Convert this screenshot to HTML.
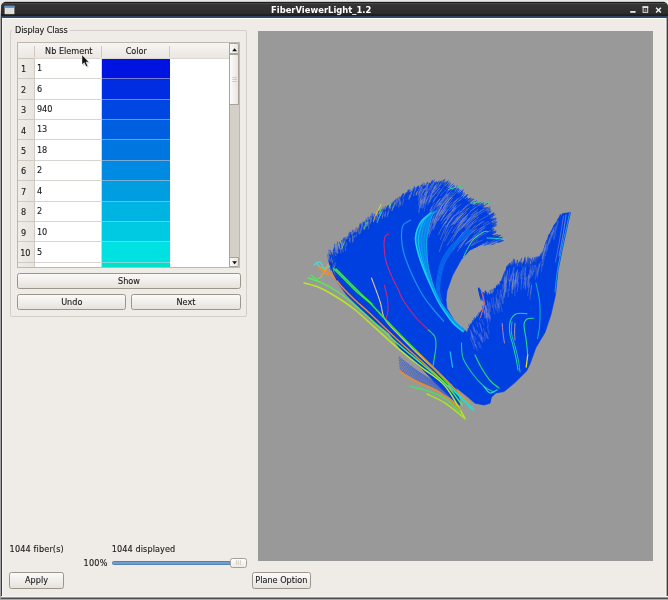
<!DOCTYPE html>
<html>
<head>
<meta charset="utf-8">
<title>FiberViewerLight_1.2</title>
<style>
html,body{margin:0;padding:0;}
body{width:668px;height:600px;overflow:hidden;position:relative;background:#e9e9e9;
  font-family:"DejaVu Sans","Liberation Sans",sans-serif;font-size:8.15px;color:#1a1a1a;-webkit-text-stroke:0.12px #1a1a1a;}
.abs{position:absolute;}
#win{position:absolute;left:1px;top:2px;width:667px;height:597px;background:#3c3c3c;border-radius:5px 5px 0 0;}
#title{position:absolute;left:0;top:0;width:667px;height:16px;border-radius:5px 5px 0 0;background:linear-gradient(#1e1e1e 0px 1px,#464646 1px 2px,#363636 2px 3px,#343434 3px 4px,#333333 4px 5px,#323232 5px 6px,#313131 6px 7px,#303030 7px 8px,#2f2f2f 8px 9px,#2e2e2e 9px 10px,#2d2d2d 10px 11px,#2b2b2b 11px 12px,#202020 12px 13px,#1d1d1d 13px 14px,#2e4262 14px 15px,#474747 15px 16px);}
#title .t{-webkit-text-stroke:0;position:absolute;left:270px;top:2.5px;white-space:nowrap;color:#fff;font-weight:bold;font-size:8.4px;letter-spacing:0.02px;line-height:10px;will-change:transform;}
#client{position:absolute;left:1px;top:16px;width:665px;height:580px;background:#efebe7;border-top:1px solid #fdfdfc;box-sizing:border-box;}
.txt{position:absolute;white-space:nowrap;line-height:10px;}
.btn{position:absolute;box-sizing:border-box;border:1px solid #9c958c;border-radius:2.5px;
  background:linear-gradient(#fbfaf9,#f1eeeb 50%,#e6e1dc);text-align:center;line-height:13.5px;}
</style>
</head>
<body>
<div class="abs" style="left:5px;top:1px;width:659px;height:1px;background:#c4c4c4;"></div>
<div class="abs" style="left:0;top:8px;width:1px;height:592px;background:linear-gradient(#e9e9e9,#a2a2a2 10px);"></div>
<div id="win">
  <div id="title"><div class="t">FiberViewerLight_1.2</div>
    <svg class="abs" style="left:0;top:0;" width="666" height="15" viewBox="0 0 666 15">
      <!-- app icon -->
      <rect x="4" y="4.2" width="9" height="7.6" fill="#deded8" stroke="#f4f4f2" stroke-width="0.7"/>
      <rect x="3.7" y="3.9" width="9.6" height="2" fill="#5a8fd0"/>
      <!-- minimize -->
      <rect x="629.2" y="9" width="5.4" height="1.8" fill="#e8e8e8"/>
      <!-- maximize -->
      <rect x="642.1" y="4.9" width="4.6" height="5.5" fill="#3a3a3a" stroke="#dcdcdc" stroke-width="1"/>
      <rect x="641.6" y="4.3" width="5.6" height="1.7" fill="#e4e4e4"/>
      <path d="M644.4 6.4v3.6M642.6 8.2h3.6" stroke="#8a8a8a" stroke-width="0.6"/>
      <!-- close -->
      <path d="M655.1 5.7 L659.9 10.6 M659.9 5.7 L655.1 10.6" stroke="#f0f0f0" stroke-width="1.5" fill="none"/>
    </svg>
  </div>
  <div id="client"></div>
</div>
<div class="abs" style="left:2px;top:19px;width:1px;height:578px;background:#f8f6f4;"></div>
<div class="abs" style="left:665px;top:19px;width:1px;height:578px;background:#f5f3f0;"></div>
<div class="abs" style="left:666px;top:18px;width:1px;height:580px;background:#b0afae;"></div>
<div class="abs" style="left:1px;top:596px;width:667px;height:4px;background:linear-gradient(#f5f3f0 0 1px,#9a9998 1px 2px,#505050 2px 3px,#a8a8a8 3px 4px);"></div>
<div class="abs" style="left:0;top:596px;width:1px;height:4px;background:#a2a2a2;"></div>
<!-- all coordinates below are page coordinates -->
<div id="ui" class="abs" style="left:0;top:0;width:668px;height:600px;will-change:transform;">
  <!-- group box -->
  <div class="abs" style="left:9.5px;top:30px;width:237.5px;height:287px;border:1px solid #d3cec8;border-radius:2px;box-sizing:border-box;"></div>
  <div class="txt" style="left:12px;top:24.5px;padding:0 2.5px 0 3px;background:#efebe7;letter-spacing:-0.1px;">Display Class</div>

  <!-- table -->
  <div class="abs" id="tbl" style="left:17.3px;top:41.6px;width:222.6px;height:226.2px;background:#fff;border:1px solid #bdb7b0;box-sizing:border-box;overflow:hidden;">
   <div class="abs" style="left:0;top:0;width:211px;height:15.6px;background:linear-gradient(#f6f4f2,#ebe7e3);border-bottom:1px solid #dcd7d2;"></div>
   <div class="abs" style="left:0;top:15.6px;width:16px;height:224px;background:linear-gradient(90deg,#f0ede9,#e8e4e0);border-right:1px solid #cfc9c2;border-top:1px solid #c9c3bc;"></div>
   <div class="abs" style="left:15.5px;top:3px;width:1px;height:11px;background:#cfc9c2;"></div>
   <div class="abs" style="left:83px;top:3px;width:1px;height:11px;background:#cfc9c2;"></div>
   <div class="abs" style="left:151px;top:3px;width:1px;height:11px;background:#cfc9c2;"></div>
   <div class="txt" style="left:17px;width:67px;text-align:center;top:3.4px;">Nb Element</div>
   <div class="txt" style="left:84px;width:68px;text-align:center;top:3.4px;">Color</div>
   <div class="abs" style="left:0;top:16.10px;width:16px;height:19.42px;border-bottom:1px solid #cfc9c2;"></div>
   <div class="txt" style="left:2.8px;top:21.70px;">1</div>
   <div class="abs" style="left:17px;top:16.10px;width:66px;height:19.42px;border-bottom:1px solid #d8d5d1;border-right:1px solid #d8d5d1;"></div>
   <div class="txt" style="left:18.6px;top:20.60px;">1</div>
   <div class="abs" style="left:84px;top:16.10px;width:68px;height:20.42px;background:rgb(0, 20, 225);"></div>
   <div class="abs" style="left:84px;top:35.52px;width:68px;height:1px;background:rgba(216,213,209,0.55);"></div>
   <div class="abs" style="left:0;top:36.52px;width:16px;height:19.42px;border-bottom:1px solid #cfc9c2;"></div>
   <div class="txt" style="left:2.8px;top:42.12px;">2</div>
   <div class="abs" style="left:17px;top:36.52px;width:66px;height:19.42px;border-bottom:1px solid #d8d5d1;border-right:1px solid #d8d5d1;"></div>
   <div class="txt" style="left:18.6px;top:41.02px;">6</div>
   <div class="abs" style="left:84px;top:36.52px;width:68px;height:20.42px;background:rgb(0, 45, 225);"></div>
   <div class="abs" style="left:84px;top:55.94px;width:68px;height:1px;background:rgba(216,213,209,0.55);"></div>
   <div class="abs" style="left:0;top:56.94px;width:16px;height:19.42px;border-bottom:1px solid #cfc9c2;"></div>
   <div class="txt" style="left:2.8px;top:62.54px;">3</div>
   <div class="abs" style="left:17px;top:56.94px;width:66px;height:19.42px;border-bottom:1px solid #d8d5d1;border-right:1px solid #d8d5d1;"></div>
   <div class="txt" style="left:18.6px;top:61.44px;">940</div>
   <div class="abs" style="left:84px;top:56.94px;width:68px;height:20.42px;background:rgb(0, 70, 225);"></div>
   <div class="abs" style="left:84px;top:76.36px;width:68px;height:1px;background:rgba(216,213,209,0.55);"></div>
   <div class="abs" style="left:0;top:77.36px;width:16px;height:19.42px;border-bottom:1px solid #cfc9c2;"></div>
   <div class="txt" style="left:2.8px;top:82.96px;">4</div>
   <div class="abs" style="left:17px;top:77.36px;width:66px;height:19.42px;border-bottom:1px solid #d8d5d1;border-right:1px solid #d8d5d1;"></div>
   <div class="txt" style="left:18.6px;top:81.86px;">13</div>
   <div class="abs" style="left:84px;top:77.36px;width:68px;height:20.42px;background:rgb(0, 95, 225);"></div>
   <div class="abs" style="left:84px;top:96.78px;width:68px;height:1px;background:rgba(216,213,209,0.55);"></div>
   <div class="abs" style="left:0;top:97.78px;width:16px;height:19.42px;border-bottom:1px solid #cfc9c2;"></div>
   <div class="txt" style="left:2.8px;top:103.38px;">5</div>
   <div class="abs" style="left:17px;top:97.78px;width:66px;height:19.42px;border-bottom:1px solid #d8d5d1;border-right:1px solid #d8d5d1;"></div>
   <div class="txt" style="left:18.6px;top:102.28px;">18</div>
   <div class="abs" style="left:84px;top:97.78px;width:68px;height:20.42px;background:rgb(0, 118, 225);"></div>
   <div class="abs" style="left:84px;top:117.20px;width:68px;height:1px;background:rgba(216,213,209,0.55);"></div>
   <div class="abs" style="left:0;top:118.20px;width:16px;height:19.42px;border-bottom:1px solid #cfc9c2;"></div>
   <div class="txt" style="left:2.8px;top:123.80px;">6</div>
   <div class="abs" style="left:17px;top:118.20px;width:66px;height:19.42px;border-bottom:1px solid #d8d5d1;border-right:1px solid #d8d5d1;"></div>
   <div class="txt" style="left:18.6px;top:122.70px;">2</div>
   <div class="abs" style="left:84px;top:118.20px;width:68px;height:20.42px;background:rgb(0, 138, 225);"></div>
   <div class="abs" style="left:84px;top:137.62px;width:68px;height:1px;background:rgba(216,213,209,0.55);"></div>
   <div class="abs" style="left:0;top:138.62px;width:16px;height:19.42px;border-bottom:1px solid #cfc9c2;"></div>
   <div class="txt" style="left:2.8px;top:144.22px;">7</div>
   <div class="abs" style="left:17px;top:138.62px;width:66px;height:19.42px;border-bottom:1px solid #d8d5d1;border-right:1px solid #d8d5d1;"></div>
   <div class="txt" style="left:18.6px;top:143.12px;">4</div>
   <div class="abs" style="left:84px;top:138.62px;width:68px;height:20.42px;background:rgb(0, 158, 225);"></div>
   <div class="abs" style="left:84px;top:158.04px;width:68px;height:1px;background:rgba(216,213,209,0.55);"></div>
   <div class="abs" style="left:0;top:159.04px;width:16px;height:19.42px;border-bottom:1px solid #cfc9c2;"></div>
   <div class="txt" style="left:2.8px;top:164.64px;">8</div>
   <div class="abs" style="left:17px;top:159.04px;width:66px;height:19.42px;border-bottom:1px solid #d8d5d1;border-right:1px solid #d8d5d1;"></div>
   <div class="txt" style="left:18.6px;top:163.54px;">2</div>
   <div class="abs" style="left:84px;top:159.04px;width:68px;height:20.42px;background:rgb(0, 180, 225);"></div>
   <div class="abs" style="left:84px;top:178.46px;width:68px;height:1px;background:rgba(216,213,209,0.55);"></div>
   <div class="abs" style="left:0;top:179.46px;width:16px;height:19.42px;border-bottom:1px solid #cfc9c2;"></div>
   <div class="txt" style="left:2.8px;top:185.06px;">9</div>
   <div class="abs" style="left:17px;top:179.46px;width:66px;height:19.42px;border-bottom:1px solid #d8d5d1;border-right:1px solid #d8d5d1;"></div>
   <div class="txt" style="left:18.6px;top:183.96px;">10</div>
   <div class="abs" style="left:84px;top:179.46px;width:68px;height:20.42px;background:rgb(0, 202, 225);"></div>
   <div class="abs" style="left:84px;top:198.88px;width:68px;height:1px;background:rgba(216,213,209,0.55);"></div>
   <div class="abs" style="left:0;top:199.88px;width:16px;height:19.42px;border-bottom:1px solid #cfc9c2;"></div>
   <div class="txt" style="left:1.9px;top:205.48px;">10</div>
   <div class="abs" style="left:17px;top:199.88px;width:66px;height:19.42px;border-bottom:1px solid #d8d5d1;border-right:1px solid #d8d5d1;"></div>
   <div class="txt" style="left:18.6px;top:204.38px;">5</div>
   <div class="abs" style="left:84px;top:199.88px;width:68px;height:20.42px;background:rgb(0, 225, 225);"></div>
   <div class="abs" style="left:84px;top:219.30px;width:68px;height:1px;background:rgba(216,213,209,0.55);"></div>
   <div class="abs" style="left:0;top:220.30px;width:16px;height:19.42px;border-bottom:1px solid #cfc9c2;"></div>
   <div class="txt" style="left:1.9px;top:225.90px;">11</div>
   <div class="abs" style="left:17px;top:220.30px;width:66px;height:19.42px;border-bottom:1px solid #d8d5d1;border-right:1px solid #d8d5d1;"></div>
   <div class="txt" style="left:18.6px;top:224.80px;"></div>
   <div class="abs" style="left:84px;top:220.30px;width:68px;height:20.42px;background:rgb(0, 225, 200);"></div>
   <div class="abs" style="left:84px;top:239.72px;width:68px;height:1px;background:rgba(216,213,209,0.55);"></div>
   <!-- scrollbar -->
   <div class="abs" style="left:210.5px;top:0;width:11px;height:224px;background:#d6cfc8;border-left:1px solid #a8a29a;box-sizing:border-box;"></div>
   <div class="abs" style="left:210.5px;top:0;width:10.7px;height:11.5px;background:linear-gradient(90deg,#fbfaf9,#e9e5e1);border:1px solid #a8a29a;box-sizing:border-box;border-radius:0 2px 0 0;"></div>
   <div class="abs" style="left:210.5px;top:11px;width:10.7px;height:51px;background:linear-gradient(90deg,#fdfcfc,#e8e4e0);border:1px solid #a8a29a;box-sizing:border-box;"></div>
   <div class="abs" style="left:210.5px;top:214.5px;width:10.7px;height:10.1px;background:linear-gradient(90deg,#fbfaf9,#e9e5e1);border:1px solid #a8a29a;box-sizing:border-box;border-radius:0 0 2px 0;"></div>
   <svg class="abs" style="left:210.5px;top:0;" width="11" height="225" viewBox="0 0 11 225">
     <path d="M3.2 8.2 L5.6 5.2 L8 8.2 Z" fill="#111"/>
     <path d="M3.2 218.2 L5.6 221.2 L8 218.2 Z" fill="#111"/>
     <path d="M3.3 34.5h4.6M3.3 36.5h4.6M3.3 38.5h4.6" stroke="#bdb7b0" stroke-width="0.7"/>
   </svg>
  </div>

  <!-- viewport -->
  <div class="abs" id="vp" style="left:258.3px;top:31.2px;width:394.7px;height:530.2px;background:#999999;"></div>

  <!--FIB--><svg id="fib" class="abs" style="left:0;top:0;" width="668" height="600" viewBox="0 0 668 600">
<path d="M336.0 264.0 L337.0 254.0 L341.0 247.0 L348.0 241.0 L343.4 242.0 L356.0 232.0 L371.6 218.0 L391.2 206.9 L405.8 194.9 L421.4 186.7 L435.0 183.6 L442.7 182.9 L441.0 184.2 L454.4 191.3 L469.9 203.8 L484.4 208.3 L491.0 220.7 L491.7 234.1 L498.4 242.4 L503.6 240.5 L484.7 242.7 L471.7 247.8 L459.9 261.0 L461.0 260.0 L452.5 275.5 L447.0 291.0 L446.0 300.0 L447.0 308.5 L455.0 322.0 L466.0 331.0 L467.0 332.7 L469.9 325.8 L478.7 314.9 L484.6 305.9 L484.5 297.9 L478.3 288.0 L478.9 290.9 L488.5 295.5 L495.2 292.0 L501.9 283.0 L507.1 269.0 L511.0 268.3 L521.8 267.3 L535.7 267.3 L544.3 252.3 L546.7 241.8 L552.2 230.8 L560.1 217.3 L562.5 213.5 L570.5 212.5 L567.0 228.0 L562.5 248.6 L558.0 271.0 L555.5 295.0 L551.0 314.5 L545.0 332.5 L536.0 347.5 L530.0 364.0 L526.6 371.0 L515.0 382.6 L504.0 391.6 L496.0 393.0 L491.5 397.0 L490.0 403.3 L484.0 405.0 L475.0 403.3 L467.8 397.0 L456.0 387.5 L459.7 400.6 L460.0 405.5 L450.7 397.9 L439.0 386.5 L419.5 366.5 L400.0 349.0 L389.3 333.2 L369.1 317.5 L346.6 295.0 L338.0 283.0 L334.0 270.0 Z" fill="#003fe0" stroke="#003fe0" stroke-width="0.6" stroke-linejoin="round"/>
<path d="M335.3 262.4Q334.2 257.7 334.3 253.0M336.9 261.2Q335.3 252.8 334.6 244.2M344.6 256.0Q342.7 248.5 341.9 240.8M337.0 260.3Q335.0 254.8 333.7 249.0M339.9 261.1Q336.6 254.5 334.2 247.5M338.0 258.6Q337.9 253.7 336.3 249.1M332.6 265.6Q331.2 261.0 330.5 256.3M335.7 260.2Q335.4 254.9 334.8 249.6M339.0 259.2Q338.4 254.9 337.5 250.6M344.3 257.7Q342.3 249.8 339.4 242.2M332.6 269.0Q330.6 263.6 329.6 257.9M335.9 262.7Q333.0 258.0 331.3 252.8M331.0 268.8Q329.2 261.6 328.2 254.2M343.5 255.5Q342.1 249.3 339.9 243.3M338.7 259.6Q338.6 253.3 338.2 247.0M331.3 267.4Q329.1 261.3 327.6 254.9M344.8 254.2Q344.0 247.0 343.0 239.9M343.7 256.3Q343.9 251.0 343.5 245.7M340.4 257.3Q337.8 250.8 336.7 243.9M339.8 257.6Q338.8 254.1 337.3 250.8M333.9 267.8Q330.9 260.9 329.2 253.6M333.1 269.6Q331.5 264.9 329.3 260.5M339.2 260.6Q337.5 253.9 334.7 247.6M334.6 268.6Q332.1 263.7 329.4 258.9M334.3 265.8Q331.6 260.6 330.2 254.9M334.6 265.2Q332.8 260.6 331.3 255.9M334.1 269.2Q330.6 263.4 328.2 257.1M337.5 261.0Q335.3 255.8 334.0 250.4M337.4 262.6Q335.1 256.8 333.6 250.8M341.0 255.7Q340.5 250.8 341.1 245.9M339.6 261.2Q336.9 254.9 334.7 248.5M340.5 259.7Q339.4 253.1 337.0 246.8M338.4 259.9Q336.0 255.0 334.6 249.8M340.0 259.4Q339.7 254.3 338.0 249.4M335.5 260.9Q334.1 255.2 333.6 249.4M333.7 263.6Q332.8 257.9 330.8 252.5M347.6 252.4Q345.9 245.3 343.2 238.5M343.6 253.9Q344.1 248.5 343.8 243.1M340.7 255.2Q341.3 249.7 340.7 244.3M339.2 258.8Q338.2 250.4 337.5 242.0M335.3 264.5Q333.8 259.1 331.8 253.9M332.1 263.9Q330.8 257.4 329.5 250.8M335.1 263.1Q333.0 256.7 330.4 250.5M332.9 267.6Q331.6 262.9 329.4 258.5M343.0 257.7Q340.9 253.3 340.0 248.6M335.3 261.8Q334.4 257.5 333.3 253.3M344.0 256.0Q343.0 251.7 341.4 247.6M334.4 262.9Q334.0 257.9 332.9 252.9M344.0 256.4Q343.8 251.4 343.5 246.4M344.1 257.2Q342.5 252.3 341.4 247.4M331.1 270.5Q329.7 264.5 328.2 258.5M331.3 266.8Q329.6 258.4 328.9 249.9M343.0 254.6Q342.3 247.5 341.6 240.5M337.9 262.3Q336.1 256.6 334.2 250.9M347.3 254.2Q344.9 247.4 343.1 240.4M336.8 262.8Q334.8 256.8 332.6 250.7M332.7 269.2Q330.8 264.2 329.7 259.0M340.8 259.0Q338.4 253.5 336.9 247.6M341.7 255.8Q341.5 250.9 339.8 246.2M334.2 264.4Q332.8 259.6 331.4 254.8" stroke="#003fe0" stroke-width="0.7" fill="none" stroke-linecap="round"/>
<path d="M405.6 200.9Q406.8 197.0 408.6 193.2M349.1 244.3Q348.7 240.6 349.5 237.0M393.2 213.1Q394.4 209.1 394.2 205.0M380.9 219.1Q381.4 214.4 382.2 209.8M435.8 190.2Q437.2 185.5 438.9 180.9M431.1 189.8Q432.9 186.0 434.7 182.1M367.8 229.2Q367.2 225.5 367.7 221.8M387.7 214.8Q388.1 210.5 388.4 206.2M355.3 240.7Q355.7 237.1 355.1 233.6M382.4 217.1Q382.5 213.9 383.9 211.1M419.9 194.4Q420.8 188.5 422.9 183.0M429.4 190.9Q431.3 186.5 432.3 181.9M387.4 215.5Q388.7 211.2 388.6 206.7M371.7 226.0Q372.2 221.3 372.0 216.7M361.6 235.6Q361.8 231.7 360.8 227.9M400.3 207.2Q401.1 203.1 401.4 198.9M431.3 190.5Q432.6 187.2 434.1 183.9M354.8 239.6Q354.6 236.5 355.4 233.5M414.2 196.8Q415.7 191.3 418.5 186.3M345.7 248.6Q345.1 244.2 345.5 239.8M359.7 236.1Q359.7 231.2 361.1 226.6M362.7 231.5Q363.7 226.7 364.1 221.9M406.7 200.3Q407.3 195.3 408.9 190.6M372.4 226.0Q372.5 221.2 372.5 216.5M374.8 222.5Q375.4 219.4 375.8 216.2M401.5 204.4Q402.7 200.0 402.4 195.4M354.0 241.8Q353.2 237.5 353.1 233.2M412.3 197.3Q412.8 192.9 413.5 188.6M354.6 240.8Q354.1 236.8 354.7 232.8M389.3 214.7Q390.8 209.3 392.2 203.8M366.1 230.6Q365.5 225.5 366.2 220.4M361.8 235.7Q362.1 231.5 361.4 227.4M391.7 211.0Q392.6 207.9 393.6 204.7M383.0 219.4Q383.4 214.6 384.4 210.0M377.8 220.7Q378.4 217.9 377.9 215.1M380.4 218.5Q381.7 214.9 382.0 211.1M391.7 211.8Q392.9 206.4 394.2 201.1M358.4 236.5Q358.1 233.2 358.0 229.8M361.7 234.6Q361.0 230.8 362.0 226.9M400.7 204.8Q402.0 199.7 403.4 194.6M401.1 203.0Q402.4 200.1 403.4 197.0M391.9 211.7Q392.5 207.8 393.7 203.9M423.2 191.9Q425.2 187.7 426.6 183.2M398.8 206.7Q399.7 202.2 401.2 197.9M425.0 191.8Q426.5 187.1 427.5 182.3M364.7 232.9Q364.8 227.8 364.5 222.6M410.9 196.5Q412.7 191.9 414.7 187.5M417.7 193.7Q419.8 189.6 421.6 185.3M429.5 191.1Q430.8 186.8 432.3 182.6M369.9 226.6Q371.3 222.2 371.8 217.6M371.7 224.9Q371.6 219.1 372.1 213.3M431.3 191.0Q433.4 186.7 434.6 182.1M364.0 233.9Q364.3 228.0 363.3 222.2M439.6 188.7Q441.6 185.4 443.1 181.8M427.8 193.1Q428.4 188.7 429.9 184.6M357.0 238.4Q355.9 233.8 355.7 229.1M364.9 232.7Q364.8 227.2 365.1 221.7M410.5 197.6Q411.9 195.2 412.0 192.3M366.6 229.1Q367.4 225.2 366.9 221.3M353.5 241.2Q353.4 237.6 352.3 234.1M420.4 193.3Q422.9 188.7 424.4 183.6M381.1 217.6Q381.6 212.6 383.2 207.8M417.8 194.9Q418.7 191.3 419.1 187.5M355.7 241.2Q354.6 236.6 355.0 231.9M379.0 219.8Q380.2 214.6 381.1 209.4M405.1 200.9Q406.6 196.0 408.6 191.2M345.8 247.1Q346.2 243.6 345.0 240.2M361.7 234.8Q362.0 230.0 361.7 225.2M406.2 202.7Q407.6 197.7 408.0 192.6M430.5 191.6Q432.4 187.3 433.2 182.6M435.3 191.1Q437.3 186.3 439.8 181.7M353.3 241.7Q353.8 237.9 354.1 234.1M390.8 213.0Q390.5 209.5 391.5 206.0M413.7 195.6Q415.2 191.9 416.1 188.0M390.0 214.1Q390.3 209.3 391.4 204.7M405.2 201.2Q407.0 198.1 407.8 194.5M360.2 236.1Q360.6 230.5 360.7 225.0M350.9 243.1Q350.5 240.0 349.9 236.9M354.6 241.0Q353.6 236.3 353.1 231.5M346.5 246.4Q346.5 242.9 346.9 239.5M394.2 212.0Q395.0 205.4 396.3 199.0M390.9 213.5Q391.0 210.2 392.0 207.0M395.5 208.5Q396.7 205.7 397.0 202.6M356.4 239.9Q357.4 233.9 356.9 228.0M359.1 236.8Q359.0 230.9 360.3 225.1M360.5 235.3Q361.8 229.9 362.0 224.4M422.0 194.5Q423.2 190.1 424.5 185.7M436.8 189.6Q439.3 185.0 442.6 180.9M430.3 191.1Q432.2 187.1 434.5 183.3M352.7 241.7Q352.1 238.0 352.2 234.2M350.8 245.2Q349.2 240.2 349.0 234.9M435.1 190.7Q435.6 186.3 437.6 182.4M386.0 217.8Q385.9 212.2 387.2 206.7M413.7 195.8Q415.5 191.3 417.1 186.8M372.0 223.3Q372.4 220.7 372.8 218.2M386.8 216.6Q386.5 213.2 387.3 209.8M391.0 214.0Q392.2 209.1 392.5 204.1M382.6 219.2Q383.1 215.4 383.5 211.6M399.5 206.1Q399.9 202.9 400.0 199.7M344.7 249.4Q345.1 245.2 344.7 241.0M406.9 200.1Q408.6 195.1 410.4 190.1M421.3 192.8Q423.7 189.5 425.0 185.7M358.7 235.9Q359.3 229.9 360.0 223.8M385.1 216.0Q386.2 213.1 386.0 210.0M411.9 197.3Q412.2 193.9 413.6 190.9M379.6 220.4Q380.5 215.4 381.3 210.4M360.2 235.8Q360.2 229.6 361.2 223.5M357.8 238.2Q358.6 233.8 358.5 229.4M389.8 212.6Q391.8 208.7 392.3 204.3M344.4 249.8Q344.1 245.3 344.9 240.8M427.8 190.8Q430.5 186.0 432.1 180.6M417.0 194.0Q418.3 189.2 420.9 185.1M406.8 200.2Q408.0 196.3 410.0 192.6M423.5 192.2Q426.3 187.8 427.7 182.9M400.6 205.1Q400.8 201.6 402.4 198.4M379.8 219.7Q380.9 214.2 381.4 208.6M399.0 207.1Q399.2 203.7 399.8 200.3M390.8 213.6Q390.7 210.3 391.2 207.0M436.9 188.6Q439.2 184.1 442.2 180.1M417.6 195.7Q419.5 190.8 421.0 185.7M367.2 228.6Q367.3 224.5 366.8 220.5M429.6 190.1Q431.6 184.8 434.3 179.9M412.0 197.0Q412.9 193.6 414.2 190.3M414.2 196.3Q416.6 191.6 418.3 186.7M420.3 193.8Q420.6 189.0 422.2 184.6M381.0 220.2Q380.3 216.4 381.0 212.7M428.2 190.4Q430.4 185.5 432.5 180.5M425.1 191.6Q426.8 187.2 429.6 183.4M407.4 201.1Q407.6 196.9 409.0 193.0M413.8 196.0Q415.1 192.4 416.6 189.0M415.2 196.3Q415.7 191.6 417.1 187.0M379.1 220.1Q380.6 216.2 381.1 212.0M410.7 200.4Q410.9 195.8 412.0 191.3M350.7 245.4Q349.9 241.6 350.0 237.6M374.1 223.6Q373.7 219.1 374.6 214.7M386.3 215.7Q386.5 211.6 387.7 207.7M344.8 249.2Q344.0 243.6 344.1 237.9M374.4 221.9Q375.3 217.9 376.1 213.9M402.4 202.8Q402.8 199.6 403.5 196.5M400.5 203.9Q401.5 200.0 402.5 196.1M364.4 231.2Q363.7 226.7 364.5 222.2M433.3 189.5Q435.2 186.2 436.7 182.6M403.0 203.1Q404.4 198.5 406.1 194.1M373.5 224.5Q374.0 220.6 374.1 216.6M403.1 203.4Q405.1 198.2 406.0 192.7M395.6 208.2Q396.8 203.0 398.0 197.7M392.4 211.1Q392.6 208.3 393.7 205.7M378.1 219.5Q379.0 215.1 379.7 210.8M438.7 189.8Q441.0 185.8 443.3 181.7M402.0 205.3Q402.6 201.0 403.7 196.8M407.1 200.6Q409.0 195.7 410.2 190.6M414.4 195.9Q415.3 192.9 415.9 189.8M437.3 189.2Q439.6 185.5 441.3 181.3M346.1 247.3Q345.2 242.5 345.3 237.6M400.0 204.6Q400.5 199.5 402.2 194.5M411.8 198.9Q412.9 194.1 414.0 189.3M365.7 228.6Q365.7 225.7 366.5 223.0M379.7 221.0Q379.9 216.0 380.8 211.0M349.2 246.5Q349.1 241.2 348.0 236.1M361.9 235.5Q361.8 230.5 361.2 225.6M378.2 221.6Q378.5 216.2 378.3 210.8M351.8 242.5Q352.8 236.4 352.4 230.1M366.7 230.2Q366.6 226.4 366.1 222.6M429.4 190.0Q430.8 187.7 431.5 185.2M392.8 211.3Q395.1 206.4 395.8 201.0M389.0 213.9Q390.6 208.1 392.2 202.2M434.9 190.8Q436.6 186.9 438.8 183.4M395.0 210.9Q395.8 206.5 397.0 202.1M439.4 188.8Q440.2 185.7 442.0 183.1M400.6 203.8Q401.7 198.8 404.0 194.2M418.6 192.9Q420.1 189.6 421.3 186.0M350.2 243.5Q349.9 239.3 350.4 235.0M397.5 206.5Q397.9 203.2 399.6 200.4M413.3 195.9Q414.9 193.5 415.4 190.7M348.0 245.9Q347.1 242.4 347.6 238.9M432.1 190.0Q434.2 186.8 435.0 183.0M359.0 238.6Q358.9 233.6 358.1 228.6M386.1 215.0Q386.5 210.1 388.3 205.6M358.4 237.0Q357.9 232.0 358.9 227.1M388.1 214.7Q390.1 208.9 391.0 202.8M400.0 207.2Q401.2 202.2 401.3 197.1M350.2 246.5Q349.3 240.2 348.6 233.9M434.2 189.1Q435.3 186.6 436.2 184.0M380.9 219.6Q382.3 214.8 382.8 209.8M391.7 211.9Q393.3 207.7 393.6 203.2M397.5 207.8Q398.4 202.7 400.2 197.7M376.7 221.5Q376.2 218.0 377.0 214.6M368.0 226.2Q368.6 222.4 369.2 218.6M402.6 204.1Q403.4 199.2 405.2 194.5M395.8 209.0Q396.9 205.9 396.3 202.6M368.3 227.6Q369.0 222.6 369.1 217.5M408.1 200.3Q409.5 195.9 411.4 191.6M369.1 225.8Q369.7 223.1 370.0 220.4M345.0 248.8Q345.4 243.4 344.5 238.0M366.1 231.1Q365.2 226.7 365.6 222.2M348.8 246.7Q347.9 242.1 347.3 237.3M357.5 238.1Q357.6 233.9 357.8 229.6M411.8 197.0Q413.9 192.8 415.7 188.4M379.7 222.6Q380.0 217.3 379.6 212.1M428.0 191.1Q429.8 188.5 430.6 185.4M411.9 196.4Q413.9 192.9 414.9 189.0M348.9 246.7Q348.5 242.6 348.1 238.6M438.6 190.7Q439.5 186.9 441.2 183.4M433.6 191.6Q434.7 186.9 436.8 182.5M349.8 244.3Q350.4 238.4 350.0 232.6M428.6 192.2Q430.6 188.5 431.8 184.4M382.8 217.7Q382.9 214.5 383.5 211.4M386.0 216.8Q387.9 211.7 388.8 206.4M434.9 190.3Q437.8 186.0 440.4 181.5M365.8 230.2Q365.8 227.3 365.4 224.5M392.7 213.5Q393.0 208.0 393.5 202.5M431.1 190.1Q433.5 185.6 436.4 181.4M410.4 197.9Q411.9 193.3 412.7 188.6M386.1 217.7Q387.2 211.6 388.0 205.4M436.4 190.2Q438.4 187.3 439.8 184.0M419.4 192.7Q421.0 188.9 422.3 185.0M398.5 206.6Q399.6 202.2 400.6 197.7M355.0 240.2Q354.6 236.7 354.0 233.3M399.6 206.1Q401.4 200.9 402.7 195.5M384.9 217.9Q385.9 212.9 386.5 207.9M361.6 233.6Q361.7 229.3 362.0 225.0M349.7 246.1Q348.6 242.0 348.2 237.8M392.1 211.8Q392.5 208.7 393.3 205.7M354.6 240.7Q354.8 237.0 354.9 233.3M382.7 217.3Q383.9 211.9 385.4 206.6M404.7 203.3Q406.4 198.0 406.7 192.6M384.1 216.6Q385.2 212.4 386.4 208.3M366.1 231.0Q367.3 226.2 367.1 221.3M397.8 209.0Q398.3 205.2 398.2 201.3M382.8 219.1Q383.0 214.7 382.7 210.4M414.8 195.2Q416.1 190.3 418.6 185.8M392.2 211.3Q393.5 206.2 394.3 201.1M438.8 190.6Q441.5 185.7 443.6 180.5M435.3 189.1Q437.1 185.8 437.9 182.1M412.5 198.2Q413.5 192.4 414.4 186.7M364.7 230.9Q364.9 227.5 365.0 224.1M353.0 239.9Q353.4 235.0 353.9 230.1M427.2 191.2Q428.7 186.3 431.4 182.1M415.5 195.2Q417.6 191.5 418.6 187.4M398.9 206.2Q401.0 200.4 402.9 194.6M375.2 224.2Q375.6 220.0 376.2 215.8M366.3 229.4Q367.4 225.6 367.9 221.6M405.4 199.6Q406.9 194.4 409.1 189.4M396.3 208.5Q396.3 205.6 396.7 202.7M396.0 208.6Q397.7 202.6 399.9 196.7M400.9 205.8Q402.0 201.8 402.8 197.7M413.1 196.6Q414.7 192.5 415.6 188.2M359.9 235.2Q360.1 230.6 360.7 226.1M365.2 231.6Q365.0 225.2 366.1 218.9M437.4 189.1Q438.7 185.0 441.2 181.5M430.2 190.1Q432.2 186.6 433.6 182.8M425.6 193.3Q426.8 188.0 429.5 183.3M347.8 246.9Q347.2 242.0 346.9 237.1M349.0 244.5Q349.0 240.6 349.0 236.7M367.5 227.7Q367.4 222.4 368.1 217.2M381.3 219.9Q382.1 214.9 383.3 209.9M399.3 206.5Q401.6 200.5 402.9 194.1M352.7 242.9Q353.0 238.8 352.9 234.7M391.7 211.5Q393.6 205.7 395.4 199.9M352.1 245.3Q351.4 238.7 349.9 232.1M351.8 242.9Q351.9 239.2 351.4 235.5M406.6 202.6Q407.2 196.5 408.0 190.3M394.7 210.7Q394.6 206.2 395.7 201.9M400.8 203.4Q402.8 198.6 403.7 193.4M377.5 220.9Q377.5 215.9 378.1 210.9M388.3 215.1Q388.2 212.1 388.4 209.1M362.4 234.8Q362.5 228.7 362.6 222.6M372.7 224.1Q374.4 219.3 374.8 214.3M411.8 198.5Q412.7 193.4 414.7 188.7M422.5 192.5Q423.3 188.8 424.5 185.3M349.8 244.1Q349.8 239.9 350.2 235.7M354.8 241.0Q354.6 236.1 354.4 231.2M419.7 193.6Q420.0 190.1 421.0 186.7M401.3 204.1Q402.5 199.8 402.7 195.3M414.1 196.6Q415.7 192.1 417.2 187.6M363.7 233.4Q362.8 228.9 362.8 224.4M382.7 220.1Q382.2 214.6 383.3 209.2M366.8 229.4Q366.2 225.4 366.7 221.4M419.8 193.1Q420.8 190.2 421.0 187.1M375.8 222.5Q376.0 218.0 377.4 213.7M403.3 204.3Q404.3 200.3 404.7 196.2M438.0 189.0Q440.3 186.2 441.5 182.8M372.8 223.4Q373.0 219.0 373.0 214.6M393.5 209.8Q394.6 205.3 395.7 200.9M411.6 197.4Q413.9 192.9 415.1 188.0M429.9 190.8Q431.8 187.6 433.5 184.3M382.8 220.1Q383.5 215.5 383.4 210.9M376.2 221.8Q377.1 218.7 377.2 215.5M351.8 243.1Q352.8 238.0 352.3 232.9M426.0 191.4Q428.3 187.5 429.2 183.1M350.2 242.5Q351.1 239.1 350.6 235.7M350.0 244.9Q350.2 238.6 350.9 232.3M396.2 208.6Q395.7 205.2 396.7 202.0M388.1 216.6Q389.1 212.2 389.3 207.7M406.4 200.1Q407.4 196.4 408.3 192.6M369.3 227.2Q369.7 221.7 370.5 216.1M415.1 196.1Q417.2 192.1 417.8 187.5M350.9 243.4Q350.9 238.7 350.3 234.0M363.5 234.7Q363.7 230.7 362.7 226.7M404.8 202.8Q405.7 198.3 405.9 193.7" stroke="#003fe0" stroke-width="0.7" fill="none" stroke-linecap="round"/>
<path d="M475.4 218.6Q481.3 215.5 486.4 211.2M475.9 217.0Q479.9 214.3 484.4 212.5M483.8 241.8Q491.2 238.5 498.9 235.9M439.4 196.9Q444.5 191.2 449.3 185.2M471.9 212.8Q476.8 209.1 481.8 205.5M486.7 243.5Q494.0 240.1 501.6 237.4M436.1 194.1Q441.2 187.9 446.2 181.5M441.4 197.6Q445.6 193.0 449.5 188.2M481.5 235.1Q488.7 233.1 496.0 231.1M484.6 240.9Q491.2 239.0 498.1 238.2M435.7 194.5Q439.3 188.9 443.4 183.7M437.1 194.1Q441.5 188.8 445.0 182.8M479.6 234.3Q486.3 231.0 493.3 228.5M479.8 223.2Q485.3 219.7 490.9 216.4M470.8 212.8Q475.6 209.3 480.6 206.3M474.4 216.3Q480.2 212.1 486.1 208.0M479.6 228.0Q484.4 225.8 489.2 223.8M480.2 232.8Q487.4 230.1 494.0 226.2M433.2 193.3Q437.2 187.6 441.8 182.4M438.8 195.1Q441.9 191.8 444.6 188.0M480.8 229.6Q485.8 228.2 490.6 226.4M486.6 242.6Q490.9 242.3 495.0 240.7M479.3 233.5Q484.8 231.6 490.5 230.0M461.1 211.4Q465.8 207.8 470.3 204.0M456.1 207.0Q461.6 203.8 466.2 199.4M456.1 207.5Q462.7 203.8 468.4 198.8M433.8 192.8Q437.7 187.8 442.5 183.5M481.2 229.0Q486.4 226.9 491.2 224.0M451.7 203.4Q456.3 199.5 460.8 195.5M476.1 215.9Q480.0 213.4 483.5 210.2M470.1 212.5Q475.7 210.1 480.8 206.7M456.2 207.2Q461.3 202.2 467.4 198.4M478.9 221.1Q486.1 218.1 492.7 214.0M467.1 212.1Q472.2 206.7 478.1 202.4M450.5 202.8Q455.9 197.6 460.9 192.1M481.5 236.7Q486.2 235.8 490.7 234.2M446.9 198.8Q450.1 195.3 453.4 192.0M443.7 198.0Q447.8 194.4 451.7 190.5M452.0 204.5Q456.8 198.3 462.5 192.9M468.3 213.1Q473.6 209.1 478.3 204.4M481.5 231.1Q488.4 227.6 495.0 223.5M456.7 206.3Q460.4 203.3 464.3 200.7M449.0 202.0Q455.6 195.7 463.0 190.6M479.2 220.4Q483.5 216.7 488.5 214.3M450.5 203.9Q455.1 199.1 460.7 195.4M471.3 211.8Q475.7 208.9 480.5 206.7M451.6 203.5Q456.6 198.3 461.9 193.6M481.5 237.5Q487.6 234.7 493.9 232.6M445.9 199.2Q451.2 194.1 457.1 189.5M449.0 201.3Q454.0 196.9 459.4 193.1M454.6 206.7Q459.3 202.5 463.4 197.8M456.2 207.1Q461.4 202.6 466.8 198.2M479.4 226.0Q484.6 222.9 490.2 220.5M476.9 220.4Q485.6 217.0 494.1 213.2M479.4 230.5Q484.8 228.7 490.0 226.4M472.9 213.7Q478.2 210.0 483.4 206.1M438.9 196.8Q441.7 192.1 445.7 188.2M480.2 227.8Q486.0 225.2 491.9 223.0M451.9 202.3Q455.3 199.8 457.6 196.3M447.5 200.5Q452.8 195.7 458.9 191.9M461.6 211.5Q467.3 207.2 472.8 202.7M485.5 244.8Q492.5 243.0 499.4 240.7M458.9 208.4Q463.9 204.9 468.7 201.3M457.9 209.1Q463.6 203.6 469.9 198.8M480.8 238.7Q488.4 236.9 496.0 234.9M485.4 243.2Q493.3 242.1 501.1 240.2M459.9 211.4Q466.5 204.8 473.8 199.1M442.4 196.8Q448.8 192.1 454.3 186.2M481.3 229.8Q485.8 228.2 490.2 226.2M480.5 230.4Q488.4 226.4 496.5 222.7M457.9 207.5Q461.7 203.9 465.5 200.3M480.1 232.5Q487.2 228.8 494.1 224.5M459.2 208.2Q465.6 204.7 471.4 200.2M453.4 205.5Q457.7 201.2 462.2 197.2M475.9 216.6Q482.9 211.6 490.2 206.9M479.2 227.4Q487.8 222.9 496.4 218.8M465.8 212.5Q471.2 208.3 477.1 205.0M480.4 232.9Q485.4 230.4 490.7 228.5M432.5 193.2Q438.3 186.2 445.1 180.3M468.3 212.2Q473.1 209.8 477.6 206.6M459.4 211.1Q465.9 204.6 473.1 198.9M436.2 195.0Q442.9 188.3 449.8 181.9M482.1 239.0Q487.5 238.3 492.6 236.4M443.4 196.2Q448.3 191.4 454.1 187.4M448.1 199.3Q453.8 194.6 459.6 189.7M480.6 237.4Q486.5 235.1 492.4 233.2M485.9 242.2Q491.2 240.3 496.6 239.0M483.5 239.5Q489.4 238.3 495.2 236.9M457.4 209.1Q462.4 203.9 467.7 198.9M484.4 241.2Q492.1 237.9 500.2 235.2M443.1 199.2Q447.0 194.1 451.6 189.7M481.0 223.8Q485.8 222.4 489.9 219.5M484.2 242.4Q491.2 240.6 497.7 237.4M446.7 201.7Q451.0 197.7 454.5 192.9M443.7 197.8Q449.1 192.0 454.4 186.1M477.7 220.9Q485.6 217.0 493.8 213.8M481.0 237.3Q488.5 235.4 495.7 232.4M480.7 227.0Q486.6 222.6 493.0 219.1M485.2 242.5Q490.5 239.6 496.4 238.1M465.0 210.1Q471.4 207.3 476.9 203.2M459.8 209.1Q463.8 205.6 467.9 202.2M442.4 197.2Q445.4 193.4 448.8 189.9M452.3 203.9Q456.8 200.6 460.8 196.8M484.6 240.3Q488.9 239.5 493.2 238.2M438.4 194.0Q443.2 189.9 447.6 185.2M447.6 198.8Q450.2 195.3 453.6 192.9M456.3 207.5Q461.0 204.5 465.6 201.3M437.4 195.6Q442.0 188.4 447.7 182.1M455.1 204.4Q461.0 200.0 466.8 195.5M446.3 198.6Q449.8 194.9 454.1 192.1M442.3 197.5Q445.9 193.7 449.3 189.8M472.2 213.4Q476.0 210.9 479.3 207.8M472.7 213.8Q479.9 208.3 487.5 203.5M475.7 213.6Q480.2 209.9 485.4 207.2M479.8 228.9Q484.3 226.3 489.2 224.2M471.4 212.9Q476.2 210.6 480.2 207.2M484.7 241.5Q491.0 240.4 496.9 237.8M437.6 194.8Q443.7 188.6 450.6 183.2M447.9 201.4Q452.9 197.3 458.1 193.3M439.0 194.6Q441.8 190.7 445.6 187.9M456.5 206.3Q462.3 201.3 467.2 195.5M481.5 228.3Q486.3 225.7 491.1 223.2M483.7 240.4Q487.9 238.3 492.6 237.2M469.6 213.8Q476.7 208.2 483.9 202.7M446.7 198.3Q451.5 193.1 455.9 187.6M456.9 206.5Q460.5 203.8 463.9 200.7M473.8 213.6Q478.2 211.0 482.8 208.9M455.2 204.7Q458.6 201.5 462.0 198.2M479.2 230.5Q484.2 228.3 489.5 226.8M485.0 243.6Q493.1 241.5 501.0 238.7M465.0 211.9Q470.0 208.4 475.1 205.0M474.3 216.0Q481.9 212.2 489.4 208.4M481.7 235.1Q488.0 233.2 493.6 229.8M466.1 212.3Q470.9 208.9 475.5 205.2M446.4 201.3Q450.3 197.0 454.4 192.8M484.7 241.8Q491.0 239.8 497.2 237.4M485.0 243.4Q490.6 242.3 496.0 240.6M436.0 193.5Q439.1 188.9 442.7 184.6M480.7 227.4Q485.1 225.6 489.6 224.1M459.4 210.5Q464.5 206.3 470.4 203.2M435.5 194.8Q441.2 188.8 447.1 183.1M445.2 198.4Q450.1 193.1 455.6 188.3M445.6 200.0Q449.8 195.2 454.4 190.7M479.2 225.6Q487.5 222.3 495.7 218.7M448.0 199.7Q452.2 195.6 457.3 192.6M434.7 193.0Q438.3 190.0 440.8 186.1M449.2 203.0Q454.6 196.2 460.9 190.2M480.9 231.4Q488.2 227.5 495.9 224.5M468.6 214.3Q473.2 210.9 477.3 206.8M477.4 220.7Q482.1 217.3 487.2 214.8M465.7 212.4Q471.4 208.6 476.6 204.4M447.4 198.7Q450.4 195.0 454.1 192.1M434.0 192.2Q437.2 188.9 440.6 185.8M453.8 206.3Q459.6 201.0 465.7 196.1M437.1 195.1Q442.2 187.4 448.3 180.4M451.9 205.0Q457.4 199.4 462.7 193.6M477.4 217.6Q482.4 214.4 487.4 211.2M459.2 207.9Q465.2 202.9 471.7 198.7M465.7 213.0Q474.1 207.6 481.8 201.4M475.2 218.6Q480.2 215.2 485.8 212.7M456.3 206.3Q459.2 202.7 462.9 200.1M456.5 208.7Q461.1 205.3 465.8 202.1M480.3 237.0Q487.9 235.2 495.3 232.7M475.5 215.6Q480.8 211.7 486.3 208.0M462.7 210.5Q467.1 207.3 471.3 204.0M472.2 212.3Q477.7 208.4 483.9 205.8M464.5 211.6Q468.8 208.2 473.8 206.0M456.9 206.2Q462.3 202.2 467.5 197.9M484.1 240.3Q490.5 236.7 497.6 234.6M449.6 203.2Q453.4 198.4 458.1 194.5M482.9 240.5Q488.5 238.8 494.2 237.6M479.8 235.9Q486.2 233.0 492.9 230.8M480.0 239.2Q486.5 237.0 492.4 233.6M443.6 198.4Q449.5 192.5 456.2 187.7M469.1 212.7Q473.5 209.4 478.5 206.8M487.9 244.4Q493.2 242.1 498.7 240.4M453.0 204.8Q457.2 202.1 460.9 198.5M445.4 197.8Q449.3 194.1 453.8 191.0M479.8 224.1Q486.1 221.4 492.6 219.0M449.7 202.7Q456.3 196.2 463.2 190.0M476.2 214.5Q481.8 210.7 487.7 207.4M444.2 197.8Q450.2 191.3 457.3 185.9M484.7 242.8Q490.6 239.5 497.2 237.7M452.5 203.9Q457.4 200.0 462.6 196.5M440.0 197.3Q444.3 193.2 447.7 188.3M479.2 223.2Q485.0 219.9 490.7 216.4M458.4 207.2Q462.1 204.6 465.4 201.4M475.2 213.3Q478.7 210.8 482.4 208.4M468.4 212.3Q474.9 207.4 481.9 203.5M483.8 240.6Q489.0 239.2 493.7 236.7M468.6 212.5Q474.3 209.9 479.5 206.6M458.6 209.6Q463.0 205.5 468.4 202.5M434.5 193.7Q439.4 186.3 444.6 179.2M469.3 211.3Q473.1 209.0 476.9 206.9M452.0 203.1Q458.2 197.9 464.6 193.0M473.6 215.2Q479.7 212.2 485.1 208.1M478.2 219.3Q484.2 215.1 490.1 211.0M465.1 213.1Q471.1 208.1 477.5 203.5M438.1 195.3Q444.5 190.4 450.3 184.6M467.3 211.8Q474.6 208.4 481.3 203.9M466.1 212.6Q471.0 209.9 475.5 206.6M477.2 219.3Q481.8 216.3 486.8 213.9M485.2 243.2Q492.1 240.6 499.4 239.0M453.0 206.6Q459.2 201.0 464.4 194.4M464.3 212.8Q468.6 209.1 472.8 205.2M437.9 195.8Q441.7 191.3 446.5 188.0M479.0 230.6Q486.0 229.1 492.5 226.1M449.4 202.5Q453.8 198.2 458.5 194.2M480.1 234.3Q485.2 232.5 490.0 229.8M480.0 231.3Q486.4 228.6 492.8 225.8M451.1 201.9Q456.0 197.6 461.4 194.0M480.7 238.8Q486.9 237.3 492.9 235.2M468.1 212.0Q473.8 209.1 479.4 205.8M462.3 211.0Q469.1 205.3 476.7 200.8M473.5 214.3Q478.8 211.2 483.4 207.4M484.7 242.4Q488.8 239.9 493.4 238.7M468.1 212.8Q472.3 209.5 476.7 206.5M465.7 211.9Q471.6 208.7 477.4 205.3M454.2 205.5Q457.9 202.6 460.8 198.8M480.9 234.3Q487.7 232.5 494.0 229.3M470.2 211.8Q474.3 208.7 478.8 206.1M457.0 207.4Q462.0 204.1 466.4 200.0M446.9 199.9Q452.5 194.3 458.7 189.4M448.4 200.0Q452.2 197.1 456.0 194.2M481.9 233.7Q487.0 231.3 492.4 229.3M479.8 231.4Q485.3 229.5 490.7 227.2M487.5 244.4Q495.2 242.0 502.6 238.8M484.0 240.3Q488.6 238.4 493.2 236.4M477.9 223.5Q485.6 219.2 493.3 214.8M481.5 230.1Q487.5 228.1 493.3 225.5M479.3 223.8Q486.0 220.5 492.9 217.7M479.7 233.0Q484.8 231.3 489.4 228.4M480.0 230.8Q487.8 227.1 496.0 224.7M444.6 198.5Q451.2 193.2 457.8 187.7M478.9 231.2Q487.8 229.0 496.4 225.8M454.0 206.1Q460.4 199.6 467.9 194.2M451.4 201.9Q455.5 198.6 459.1 194.8M482.9 240.6Q488.0 238.4 493.3 236.5M434.1 194.4Q439.1 188.2 444.4 182.3M471.7 212.7Q477.8 208.9 483.0 204.0M458.5 207.4Q462.1 203.3 466.5 200.0M478.8 230.1Q485.1 227.6 491.5 225.8M476.9 215.7Q483.4 212.3 490.0 208.9M483.0 239.3Q487.5 238.3 491.7 236.4M483.3 241.1Q492.1 238.8 500.4 235.3M476.2 218.5Q483.6 215.8 490.6 212.0M437.5 196.6Q443.6 190.3 448.6 183.1M479.4 222.3Q486.8 218.1 493.5 212.8M439.2 196.3Q446.1 189.9 453.2 184.0M486.1 242.4Q493.6 241.1 501.1 239.5M482.1 237.0Q487.3 234.7 492.5 232.6M455.9 206.1Q459.4 202.5 463.0 199.2M447.1 200.3Q451.7 195.8 455.7 191.0M480.8 223.9Q486.8 219.9 492.9 216.0M479.7 227.5Q487.6 224.0 495.7 220.8M485.1 243.2Q490.6 242.8 495.9 241.2M475.8 218.1Q483.4 214.6 490.3 210.0M442.5 195.7Q448.5 190.9 453.7 185.5M480.3 226.0Q487.5 221.5 495.2 218.0M436.1 194.8Q441.1 190.8 445.4 186.0M480.3 235.7Q487.8 232.6 495.8 231.0M480.9 229.6Q485.9 227.5 490.3 224.3M481.6 230.5Q485.9 227.9 490.3 225.8M478.9 236.6Q485.9 234.3 493.0 232.6M473.8 214.5Q478.6 212.3 482.7 209.0M485.7 242.0Q490.8 240.2 495.7 237.8M477.8 220.6Q484.1 215.3 491.2 211.2M467.5 212.9Q473.8 209.1 479.5 204.7M461.4 209.8Q466.2 206.0 470.3 201.6M458.0 208.4Q463.7 202.7 470.2 198.1M434.8 192.0Q439.6 188.0 443.6 183.2M445.9 198.0Q449.6 193.6 453.9 189.7M480.6 232.0Q485.7 228.5 491.4 226.2M448.0 202.2Q452.7 198.6 457.2 194.7M477.7 219.6Q483.5 217.4 488.6 214.1M481.4 227.8Q489.3 225.3 496.9 221.8M479.8 224.5Q487.3 219.3 495.2 214.7M471.0 212.8Q475.4 209.9 479.6 206.7M454.0 206.6Q460.5 201.9 466.7 196.7M452.8 204.9Q456.0 201.0 459.7 197.7M448.1 199.1Q453.5 193.8 458.7 188.3M478.2 218.8Q482.8 217.0 487.1 214.4M477.9 222.6Q483.0 220.7 487.7 217.9M484.1 242.5Q488.9 240.6 493.5 238.4M456.5 206.3Q461.3 202.9 465.8 199.2M485.0 241.1Q491.4 238.2 497.9 235.7M482.4 239.5Q488.5 237.6 494.4 235.5M453.6 205.3Q458.0 200.8 463.0 196.9M483.1 241.5Q488.7 239.9 494.4 239.0M477.4 217.5Q482.9 214.6 487.9 211.0M485.7 241.2Q492.4 239.3 499.4 238.3M479.6 228.1Q487.3 225.5 494.9 222.6M457.1 207.1Q461.4 203.3 465.7 199.5M453.0 205.0Q457.6 201.6 461.3 197.1M471.6 212.9Q475.7 209.8 480.0 206.9M468.8 211.7Q473.5 209.4 477.3 205.8M436.2 194.9Q439.0 190.7 442.0 186.8M479.7 235.6Q486.0 234.0 492.1 232.0M472.1 214.1Q476.8 210.8 481.3 207.2M467.9 211.5Q472.6 208.4 477.0 204.8M480.7 227.2Q484.7 224.5 489.2 222.7M450.0 203.8Q456.0 197.6 462.7 192.3M446.9 201.8Q451.4 196.2 456.9 191.5M474.4 216.4Q478.7 213.1 483.2 209.9M451.0 202.6Q456.5 197.1 462.1 191.8M456.8 207.7Q461.3 203.3 465.7 198.9M438.1 196.9Q443.1 190.8 448.0 184.6M437.5 193.3Q440.8 190.2 443.8 186.9M458.5 207.9Q464.3 203.0 470.3 198.3M470.8 213.2Q477.2 209.0 483.6 204.9M483.4 243.2Q491.2 240.3 499.0 237.3M477.2 218.8Q482.3 216.4 487.1 213.6M460.7 210.9Q467.3 206.2 473.9 201.7M461.2 210.6Q466.4 206.8 471.6 202.9M450.1 204.4Q455.6 197.1 462.3 190.9M467.4 210.2Q472.9 206.4 479.0 203.4M485.9 242.1Q493.8 238.9 502.1 237.2M440.2 197.1Q445.8 192.6 451.1 187.8M463.7 212.2Q467.4 208.4 471.6 205.2M477.6 222.7Q485.6 218.7 493.6 214.7" stroke="#003fe0" stroke-width="0.7" fill="none" stroke-linecap="round"/>
<path d="M488.3 244.6Q490.4 243.2 492.6 242.1M473.3 247.6Q475.6 246.3 478.1 245.5M461.0 257.7Q463.3 255.0 466.4 253.7M483.8 244.9Q487.0 243.0 490.5 241.8M469.7 249.6Q472.1 248.5 474.2 246.9M494.5 242.7Q496.5 242.0 498.5 241.2M485.9 244.0Q488.2 243.6 490.2 242.5M489.2 243.1Q491.9 241.6 494.9 241.3M473.5 247.4Q475.1 245.9 477.4 245.8M465.2 253.4Q467.9 250.4 471.5 248.6M487.3 243.6Q489.3 242.9 491.3 242.2M466.5 252.4Q467.9 250.4 470.1 249.5M469.6 249.3Q472.0 248.3 474.3 246.9M462.7 255.7Q465.5 253.7 468.3 251.6M455.2 265.6Q457.4 263.8 459.1 261.5M481.0 245.4Q484.2 243.3 487.6 242.0M455.6 264.7Q457.3 262.6 459.5 261.2M476.1 246.6Q477.8 245.4 479.9 244.7M472.5 248.5Q475.4 247.4 477.8 245.5M489.4 244.2Q491.4 243.1 493.3 242.1M494.0 243.3Q496.2 242.4 498.3 241.4M467.6 250.7Q470.4 248.8 473.2 247.0M491.9 244.6Q494.8 243.5 497.2 241.6M497.4 242.2Q498.9 241.4 500.7 241.2M493.1 244.2Q495.5 242.4 498.3 241.4M471.7 248.8Q474.5 247.8 476.8 245.8M488.8 243.4Q491.4 241.7 494.4 241.3M485.2 244.5Q487.7 244.1 489.6 242.4M463.8 255.3Q465.1 253.8 466.8 252.9M475.7 247.2Q477.5 245.3 480.1 244.6M490.3 244.8Q493.6 243.1 496.7 241.2M466.2 252.7Q468.6 250.6 471.1 248.7M455.8 263.9Q457.8 261.6 460.6 260.3M468.0 249.8Q470.4 249.4 472.3 247.8M475.2 247.6Q478.3 245.5 481.7 243.8M471.7 249.5Q473.5 247.5 475.9 246.4M465.5 253.2Q467.6 251.3 470.0 249.8M461.4 257.6Q463.6 256.6 465.3 254.9M461.0 257.0Q464.3 255.5 467.0 253.0M484.6 245.3Q487.2 243.7 489.9 242.5M463.0 256.0Q465.3 254.5 467.4 252.7M492.7 242.4Q496.0 241.5 499.3 240.7M491.4 244.3Q494.4 242.3 497.8 241.0M473.5 248.2Q475.2 246.7 477.3 245.8M489.4 243.4Q491.9 242.5 494.4 241.5M471.4 249.2Q474.3 247.7 476.8 245.6M485.0 244.2Q486.5 242.7 488.6 242.5M457.3 261.8Q459.4 259.6 462.2 258.5M477.4 245.6Q479.0 244.3 481.1 244.2M461.6 257.9Q464.0 255.5 466.7 253.6" stroke="#003fe0" stroke-width="0.7" fill="none" stroke-linecap="round"/>
<path d="M504.2 286.2Q504.4 280.1 503.9 274.0M497.9 295.3Q498.3 291.9 497.6 288.6M498.6 295.2Q498.7 289.7 498.0 284.1M493.0 301.4Q493.5 296.2 493.5 291.1M480.8 299.9Q480.7 295.8 480.0 291.7M503.0 283.0Q503.5 277.3 504.5 271.8M496.1 300.5Q495.5 294.8 494.0 289.2M503.3 285.1Q504.5 281.0 504.4 276.6M484.4 300.8Q484.3 296.7 483.1 292.8M496.4 298.7Q496.0 295.5 495.7 292.3M499.0 296.4Q498.4 291.6 498.5 286.7M486.7 299.7Q485.9 295.7 484.8 291.7M483.4 300.3Q482.9 295.8 481.7 291.3M504.8 278.2Q505.1 274.1 506.2 270.1M505.3 278.5Q505.0 274.4 506.2 270.5M507.0 277.3Q506.3 273.3 507.0 269.3M498.1 295.9Q497.9 290.4 498.6 285.0M501.3 286.2Q502.3 281.1 503.1 276.0M500.4 293.0Q500.3 287.2 500.2 281.3M496.5 297.2Q496.4 291.8 496.8 286.4M487.0 301.9Q485.8 296.8 485.4 291.6M501.7 292.1Q501.9 287.6 501.2 283.1M496.3 299.4Q495.9 295.7 496.0 291.9M501.3 289.0Q501.1 283.9 502.2 279.0M482.2 300.0Q481.5 296.2 480.7 292.4M490.6 300.8Q491.0 295.5 490.2 290.2M484.0 300.1Q484.2 297.0 483.5 293.9M502.9 286.4Q503.5 280.7 503.5 275.0M495.8 297.7Q495.6 292.5 496.8 287.5M490.0 303.4Q490.8 299.1 490.2 294.7M503.4 285.7Q504.0 282.0 503.7 278.2M498.5 294.7Q497.5 289.9 498.0 285.0M490.9 300.6Q491.1 297.9 490.5 295.3M494.0 299.1Q494.4 296.1 494.4 293.1M480.3 297.2Q479.7 293.0 478.6 288.9M482.0 298.2Q481.6 295.3 481.3 292.3M481.1 298.2Q480.6 294.5 480.2 290.9M504.6 276.8Q505.7 271.7 506.8 266.5M504.8 281.0Q505.3 277.1 505.2 273.2M497.7 293.9Q497.8 289.8 498.6 285.8M505.9 278.1Q505.8 275.1 506.1 272.1M497.9 294.1Q497.7 291.2 498.5 288.4M502.1 289.1Q502.3 284.0 502.2 278.9M483.7 301.5Q483.8 297.0 483.0 292.5M497.1 299.0Q496.6 293.9 495.7 288.9M500.7 291.7Q499.9 287.0 500.4 282.2M493.8 300.7Q495.0 294.5 494.8 288.2M500.7 289.5Q500.9 286.1 501.5 282.8M492.5 300.2Q491.5 294.8 492.1 289.4M501.2 292.2Q502.0 286.4 501.6 280.6M488.1 303.0Q488.0 297.8 486.9 292.7M497.0 295.9Q496.9 291.6 497.1 287.2M494.8 299.0Q495.6 294.0 495.4 288.8M498.5 296.1Q498.7 292.0 498.1 287.8M482.8 299.8Q481.9 295.4 480.9 291.1M489.3 302.0Q488.8 297.5 488.3 293.1M502.1 287.0Q501.9 283.6 502.7 280.3M486.7 301.3Q485.5 297.6 485.4 293.6M497.7 297.6Q497.4 291.8 496.7 285.9M506.5 278.2Q507.4 273.1 507.1 267.9M500.1 293.5Q501.0 289.0 500.4 284.6M501.3 288.5Q502.8 283.0 503.0 277.4M502.6 286.8Q503.2 283.0 503.5 279.2M507.3 279.2Q506.7 272.8 506.9 266.4M494.8 299.4Q495.1 294.7 494.0 290.1M495.8 300.2Q495.4 294.3 494.3 288.5M504.1 285.6Q503.2 281.2 503.3 276.8M480.4 297.8Q479.3 293.6 479.5 289.2M497.4 297.6Q497.7 292.0 496.5 286.5M490.0 300.9Q490.5 298.0 489.7 295.1M499.7 294.4Q500.0 289.5 498.9 284.8M501.4 289.0Q501.6 284.2 502.9 279.6M503.8 282.4Q504.6 278.7 504.9 274.9M496.7 296.9Q496.5 292.3 497.6 287.9M501.1 288.9Q501.2 284.5 502.3 280.2M482.4 300.3Q482.9 296.7 482.2 293.2M500.4 291.7Q501.2 286.5 501.7 281.2M505.7 278.4Q505.7 275.6 505.9 272.8M499.2 292.9Q499.6 287.4 500.5 282.0M495.9 296.1Q496.6 290.9 497.1 285.7M497.1 294.9Q497.6 291.6 497.7 288.3M494.3 298.9Q494.5 293.6 494.9 288.2M487.0 301.2Q486.3 298.1 486.1 295.0M486.8 301.3Q486.2 297.0 486.5 292.6M503.3 286.1Q503.6 281.0 503.9 276.0M498.2 296.6Q497.4 291.6 497.8 286.6M481.4 298.6Q480.2 294.0 480.0 289.2M500.7 291.7Q500.1 286.9 500.5 282.1M504.6 282.5Q504.0 279.6 504.4 276.6M500.9 292.1Q501.7 288.0 501.5 283.9M485.7 301.6Q485.0 296.9 485.8 292.1M505.5 277.6Q505.6 274.5 506.3 271.5M486.1 301.7Q485.4 296.2 485.7 290.7M497.2 296.9Q497.2 292.6 497.7 288.4M497.6 297.0Q496.3 293.5 496.4 289.8M486.8 302.9Q486.7 298.6 485.5 294.4M489.6 301.1Q489.0 297.7 489.4 294.2M488.3 302.2Q486.6 298.4 486.3 294.3M487.5 301.4Q486.5 297.8 485.6 294.1M481.7 298.8Q481.7 295.3 480.6 292.0M500.4 289.9Q500.7 285.7 501.3 281.5M500.7 290.4Q500.6 286.7 501.9 283.2M489.0 301.6Q488.7 297.2 488.6 292.8M505.9 278.7Q506.6 273.9 506.5 269.1M495.5 300.0Q494.7 294.5 495.3 289.0M497.9 298.9Q497.7 293.0 496.2 287.3M504.8 279.0Q505.8 276.0 505.9 272.9M501.8 290.6Q502.1 286.1 501.4 281.7M497.7 297.8Q497.4 291.9 496.4 286.1M502.2 287.9Q503.0 284.1 503.1 280.2" stroke="#003fe0" stroke-width="0.7" fill="none" stroke-linecap="round"/>
<path d="M512.1 277.8Q513.5 272.3 513.7 266.7M515.8 276.7Q516.3 271.8 517.0 266.9M527.6 274.1Q528.7 269.2 529.8 264.4M506.6 282.2Q507.8 275.5 508.2 268.7M524.3 274.0Q525.9 270.7 526.2 267.1M523.7 274.9Q525.6 265.9 528.1 257.0M515.3 276.3Q517.2 271.7 517.8 266.9M530.6 276.0Q533.1 269.5 534.9 262.6M522.2 276.4Q523.6 270.3 523.9 264.0M529.3 276.4Q529.9 271.6 531.6 266.9M507.5 277.1Q509.2 273.3 509.7 269.2M514.8 276.7Q516.3 268.5 517.5 260.2M509.3 277.3Q512.1 269.5 513.5 261.4M515.9 276.8Q517.6 270.6 519.5 264.5M525.3 274.9Q526.9 271.1 527.3 266.9M531.3 275.6Q535.1 266.7 537.5 257.2M530.3 274.1Q532.4 268.6 533.5 262.8M528.7 274.5Q530.3 266.0 532.8 257.6M533.6 275.3Q535.1 266.3 537.0 257.3M525.4 276.4Q526.5 268.6 528.1 260.8M525.6 275.6Q527.0 266.9 528.8 258.3M505.9 280.5Q506.9 275.7 507.8 270.8M515.1 275.2Q515.9 267.9 517.4 260.7M517.2 277.3Q518.2 272.5 518.5 267.5M505.7 281.7Q507.0 275.2 508.4 268.6M530.5 274.6Q531.7 269.8 532.6 264.9M513.1 275.3Q513.8 271.1 514.9 267.0M508.5 276.6Q510.6 270.9 511.4 264.9M506.5 280.1Q507.0 274.6 507.9 269.2M517.4 275.4Q519.9 269.6 521.0 263.3M511.8 276.9Q513.5 268.8 515.0 260.8M531.3 275.9Q533.1 269.4 534.7 262.7M520.2 275.4Q522.4 268.2 524.7 260.9M515.2 276.5Q516.0 271.5 516.9 266.5M506.3 278.5Q508.4 271.2 510.2 263.7M504.3 283.2Q505.0 276.7 507.2 270.5M523.0 275.9Q524.5 270.2 525.7 264.4M521.6 276.4Q522.7 269.4 523.7 262.3M516.6 274.4Q518.5 267.7 520.2 260.9M517.9 276.2Q518.6 271.6 519.2 266.9M513.5 277.0Q515.3 270.3 516.8 263.7M531.2 275.9Q532.0 270.0 533.0 264.1M506.2 283.1Q507.4 274.6 508.1 266.1M508.3 277.7Q509.8 271.1 511.2 264.5M526.8 275.5Q527.5 271.3 528.5 267.3M511.8 276.6Q512.8 268.0 514.6 259.6M512.2 275.7Q513.0 268.9 514.6 262.3M514.9 276.5Q516.4 271.1 517.1 265.6M510.5 275.6Q512.0 270.9 512.6 266.1M526.5 277.0Q527.6 267.5 529.5 258.2M505.4 279.6Q507.1 273.4 508.5 267.2M518.9 276.0Q520.6 270.0 521.5 263.9M524.4 275.5Q525.4 271.1 526.0 266.7M511.1 276.6Q512.4 270.2 514.6 264.0M525.5 275.6Q527.1 269.7 527.3 263.6M511.9 275.7Q513.0 270.7 514.6 265.7M520.2 275.5Q521.6 269.2 523.8 263.1M507.1 279.4Q507.6 275.0 508.0 270.5M510.6 277.3Q511.5 270.4 513.8 263.9M518.8 274.1Q520.0 268.2 522.0 262.4M520.5 274.9Q522.0 268.7 523.6 262.5M515.8 276.1Q517.2 270.2 518.4 264.3M505.3 283.7Q505.8 275.3 507.6 267.0M518.1 274.7Q520.2 269.0 521.1 262.9M528.8 274.3Q530.1 269.5 531.5 264.7M508.9 277.4Q511.0 272.3 511.7 266.9M507.7 277.3Q509.7 272.6 510.3 267.5M521.0 275.2Q523.3 266.8 524.9 258.3M509.1 278.0Q509.6 273.3 510.4 268.6M506.6 281.8Q508.5 273.0 509.2 263.9M506.4 280.0Q506.8 276.0 507.3 272.0M520.6 275.6Q522.2 269.0 524.1 262.5M530.3 274.7Q531.2 267.9 532.9 261.3M525.3 276.2Q527.7 270.1 528.6 263.7M519.8 274.0Q521.4 269.0 522.6 263.9M528.4 274.9Q530.9 269.9 531.9 264.5M528.0 274.6Q530.5 266.9 532.3 258.9M510.1 275.6Q510.3 271.9 511.3 268.2M513.5 275.7Q515.0 271.5 515.2 267.1M532.9 274.6Q534.1 269.5 535.2 264.4M532.6 275.1Q533.3 268.4 534.8 261.9M522.3 276.3Q524.4 267.9 525.3 259.4M520.1 276.4Q522.0 270.6 523.7 264.7M511.8 277.5Q513.2 271.4 514.3 265.1M506.2 281.7Q506.8 277.1 507.5 272.5M511.2 276.7Q511.5 272.6 513.1 268.8M508.9 276.6Q510.5 271.6 510.9 266.3M521.0 276.6Q522.9 268.9 524.6 261.1M522.1 275.7Q523.0 271.7 523.9 267.7M520.9 275.3Q522.4 268.1 524.5 261.2M528.9 275.5Q531.2 266.3 534.8 257.4M505.1 283.5Q505.6 276.1 506.7 268.7M508.7 276.6Q508.6 273.1 509.8 269.8M507.0 281.2Q507.7 273.6 508.8 266.1M512.8 276.7Q514.6 270.8 515.3 264.8M529.7 276.4Q531.4 270.4 533.2 264.3M516.9 275.8Q518.6 269.6 518.8 263.1M526.8 275.8Q527.9 271.1 528.9 266.3M508.4 277.1Q509.7 271.2 510.3 265.3M512.7 277.1Q512.7 272.8 514.0 268.7M525.9 276.4Q528.8 267.8 530.7 259.0M509.7 276.8Q510.3 271.6 512.4 266.8M524.5 275.6Q524.8 271.1 526.5 267.0M519.8 276.6Q521.3 272.1 522.1 267.4M520.7 275.6Q523.4 268.5 525.4 261.1M504.7 283.2Q505.4 275.3 507.3 267.7M512.5 275.2Q514.1 269.4 515.2 263.5M532.2 276.3Q534.6 269.4 536.1 262.3M512.7 275.0Q514.8 269.6 515.7 263.8M509.2 277.8Q512.1 268.6 513.5 259.1M533.6 275.4Q534.7 270.3 535.8 265.2M519.4 275.7Q521.1 271.4 521.9 266.9M524.0 275.0Q525.3 269.6 526.0 264.2M516.5 275.5Q517.4 268.5 519.6 261.8M519.6 274.9Q522.2 266.0 525.2 257.2M514.2 275.1Q515.2 272.0 515.1 268.7M509.7 276.1Q510.1 270.7 512.0 265.8M509.4 277.8Q510.5 272.1 512.4 266.7M509.3 276.7Q510.0 271.1 511.0 265.6M524.1 276.9Q525.1 269.9 526.3 262.9M506.5 281.7Q507.7 274.6 508.4 267.4M505.9 281.1Q508.1 272.2 509.6 263.2M517.9 274.5Q518.9 270.5 519.4 266.3M533.5 276.1Q534.4 271.0 535.3 265.9M526.9 275.7Q528.9 267.5 530.0 259.2M522.4 274.0Q524.0 270.6 524.5 266.8M524.6 275.6Q525.6 270.5 527.2 265.6M507.4 279.2Q508.9 274.5 509.8 269.6M517.9 274.8Q518.0 271.2 519.2 267.7M505.2 282.6Q506.5 276.9 506.5 271.1M518.1 275.7Q519.9 267.1 521.5 258.4M504.7 281.9Q506.8 273.5 507.9 264.9M505.6 281.4Q508.0 273.1 509.3 264.6M506.1 281.2Q508.2 274.1 509.0 266.8M513.1 275.3Q514.3 270.8 514.2 266.2M515.9 274.4Q517.8 268.5 519.2 262.5M507.7 277.9Q509.5 269.9 511.5 262.0M504.3 281.7Q506.7 274.6 508.2 267.2M507.7 279.8Q508.3 272.3 509.4 264.9M530.7 275.3Q532.9 265.9 536.2 256.8M532.0 276.6Q534.3 270.0 535.8 263.3M530.5 274.5Q532.5 267.8 534.0 261.0M507.3 280.4Q507.9 274.1 509.1 267.8M508.8 278.2Q510.0 273.6 509.9 268.9M529.0 276.7Q530.4 269.9 532.3 263.1M504.3 283.8Q505.9 277.7 506.5 271.4M506.5 278.9Q507.3 273.2 509.3 267.7M522.5 275.9Q522.7 270.7 524.1 265.8M531.7 274.9Q533.8 266.7 536.3 258.6M530.3 276.7Q532.6 268.0 534.8 259.3" stroke="#003fe0" stroke-width="0.7" fill="none" stroke-linecap="round"/>
<path d="M542.0 259.0Q543.1 255.1 544.6 251.3M544.9 248.4Q545.8 245.2 546.6 241.9M543.5 254.3Q543.9 250.4 545.5 246.8M545.2 249.3Q546.6 244.5 547.6 239.6M539.5 263.5Q540.6 259.0 542.4 254.8M551.4 237.8Q552.2 231.1 554.5 224.8M555.4 228.2Q556.6 222.5 559.2 217.3M548.9 241.4Q550.5 237.4 550.8 233.2M556.3 227.3Q557.6 223.1 558.9 219.0M552.3 233.2Q554.6 229.2 555.4 224.7M546.3 245.4Q548.1 240.0 549.6 234.5M545.5 246.9Q547.1 243.2 548.0 239.3M549.4 238.7Q550.8 234.9 552.0 231.1M544.0 253.0Q545.5 247.3 546.9 241.6M537.6 265.7Q538.6 260.8 539.9 255.9M543.8 250.1Q544.9 245.0 547.1 240.2M552.7 232.3Q554.4 228.3 555.6 224.1M549.2 240.0Q549.7 235.9 551.5 232.2M536.3 266.8Q537.8 262.2 538.7 257.3M552.8 234.4Q554.7 228.3 556.4 222.1M536.3 268.5Q537.2 264.4 538.1 260.3M545.5 245.6Q547.9 240.0 549.5 234.2M539.4 263.9Q540.7 258.0 543.1 252.4M542.6 257.4Q543.7 250.9 546.2 244.9M541.9 260.4Q542.6 256.8 544.0 253.4M547.8 241.7Q549.9 236.4 551.3 231.0M549.6 238.7Q551.4 232.1 553.9 225.7M554.1 230.5Q554.8 226.6 556.7 223.1M546.3 246.8Q548.3 240.8 549.3 234.6M536.8 266.4Q537.2 263.0 538.5 259.9M536.5 266.8Q536.5 263.0 538.1 259.6M537.5 265.1Q538.7 262.1 539.3 258.9M539.1 264.1Q539.7 260.5 540.8 257.0M540.9 261.6Q542.0 257.8 542.6 253.9M542.2 257.7Q543.8 253.5 545.0 249.2M540.1 263.5Q540.2 259.2 541.7 255.3M554.4 232.4Q556.7 226.2 557.5 219.6M543.6 253.3Q545.0 247.4 546.9 241.6M544.4 249.8Q546.5 245.5 547.2 240.8M551.5 234.5Q553.5 229.0 555.4 223.5M539.9 263.4Q542.0 257.6 543.4 251.5M545.4 248.4Q547.9 242.3 548.9 235.8M535.4 269.0Q536.2 264.2 538.1 259.7M544.9 247.7Q546.5 243.8 547.6 239.7M555.1 228.1Q557.1 223.1 558.9 217.9M547.7 243.3Q548.0 239.7 549.3 236.4M542.8 258.3Q543.4 253.6 545.0 249.2M548.6 241.5Q549.3 237.8 550.5 234.2M546.0 247.1Q546.7 243.5 547.7 239.9M545.8 248.2Q548.0 242.5 548.7 236.4M548.1 241.9Q549.4 237.2 551.0 232.7M550.1 237.4Q551.9 233.5 552.8 229.2M553.5 230.9Q556.3 225.1 558.2 218.9M556.8 225.5Q559.3 220.7 560.3 215.4M556.9 227.4Q558.6 220.9 560.4 214.4M553.0 232.6Q554.7 229.4 555.0 225.8M549.6 238.5Q550.7 233.0 552.9 227.8M552.2 233.3Q553.3 228.2 555.6 223.4M540.3 261.7Q541.3 256.8 543.5 252.3M541.8 260.7Q542.1 257.2 543.1 253.8M553.3 232.4Q555.0 228.2 556.0 223.8M543.6 250.2Q545.3 245.0 547.2 239.9M535.1 267.3Q537.0 262.0 538.5 256.5M551.6 237.0Q553.0 231.2 554.4 225.4M538.8 263.7Q539.6 258.5 541.8 253.6M542.0 259.2Q543.5 254.1 545.1 249.0M555.2 228.1Q556.8 223.8 558.3 219.5M540.0 261.9Q542.0 256.2 543.8 250.5M553.5 232.9Q554.1 229.0 555.4 225.3M543.2 257.7Q544.7 253.4 545.2 248.8M552.3 235.4Q554.3 229.4 555.6 223.2M543.7 253.1Q545.5 249.3 545.9 245.2M547.4 244.6Q549.1 240.2 549.5 235.5M550.1 238.8Q551.5 234.0 552.5 229.1M550.3 238.2Q551.0 233.1 553.1 228.4M541.0 262.4Q541.9 257.7 543.5 253.1M549.5 240.8Q550.2 235.8 551.8 230.9M539.2 264.2Q540.6 258.9 542.4 253.8M543.3 258.8Q545.2 253.3 545.6 247.6M551.9 234.5Q552.3 230.7 554.2 227.3M540.0 264.3Q540.3 258.8 542.2 253.7M544.3 252.2Q544.9 248.2 546.0 244.3M538.0 265.2Q539.2 261.3 540.4 257.3M547.0 243.1Q548.7 238.0 550.5 232.9M540.8 263.6Q542.7 257.9 543.2 251.8M543.4 252.8Q544.2 248.4 546.2 244.3M556.6 227.2Q558.4 221.3 560.3 215.5M544.0 251.3Q546.1 246.7 546.6 241.7M545.2 246.2Q546.8 240.4 549.1 235.0M534.9 269.1Q537.2 263.4 538.5 257.4M542.3 259.3Q542.8 254.9 544.7 250.8M537.7 266.9Q538.7 261.2 540.6 255.8M548.0 241.5Q549.2 237.4 550.6 233.4M539.3 264.7Q541.2 258.0 542.8 251.3M541.1 261.4Q541.4 257.6 542.6 254.0M539.1 265.5Q540.5 260.1 541.7 254.6M550.7 238.2Q552.2 232.0 554.1 226.0M548.4 239.6Q550.0 235.1 551.7 230.8M542.4 256.8Q543.9 252.6 545.3 248.3M543.1 256.4Q544.8 252.6 545.1 248.5M542.8 259.1Q545.0 253.2 545.6 247.0M547.3 244.0Q548.7 239.5 549.6 234.8M547.4 244.6Q548.8 240.3 549.5 235.7M539.0 264.4Q540.7 258.7 541.9 253.0M539.5 262.3Q540.9 259.3 541.6 256.0M548.3 242.2Q549.5 238.4 550.4 234.5M542.7 257.7Q544.3 253.6 545.0 249.3M548.9 240.6Q550.9 235.8 551.9 230.7M541.1 261.4Q541.5 256.5 543.2 251.9M537.2 265.5Q539.4 259.7 541.0 253.7" stroke="#003fe0" stroke-width="0.7" fill="none" stroke-linecap="round"/>
<path d="M482.0 318.8Q480.2 316.0 479.0 312.9M482.6 297.8Q481.9 295.9 481.9 293.9M478.4 322.6Q476.7 319.7 476.5 316.3M482.3 316.2Q481.3 314.6 480.9 312.7M476.5 325.7Q474.8 323.4 473.7 320.8M470.9 330.3Q469.5 327.8 468.8 324.9M484.8 312.9Q484.3 310.5 483.4 308.3M472.1 331.9Q471.2 329.6 469.8 327.6M472.5 330.7Q470.7 328.8 470.2 326.3M477.0 324.7Q475.9 322.7 475.0 320.8M486.4 305.5Q485.4 303.3 484.7 301.0M480.4 294.8Q479.8 291.7 478.9 288.7M474.3 327.2Q473.8 324.4 471.9 322.2M474.7 328.2Q473.9 324.5 472.6 321.0M480.0 295.5Q479.8 292.5 479.2 289.6M485.9 313.7Q484.9 309.7 482.8 306.1M485.0 303.9Q485.1 300.9 484.2 298.0M480.0 294.3Q478.8 291.6 478.5 288.7M487.2 310.2Q485.4 307.8 484.8 304.8M474.8 326.5Q474.2 323.4 472.7 320.7M480.5 294.6Q480.4 291.3 478.8 288.4M482.4 297.2Q482.0 294.5 481.1 291.9M470.2 337.5Q468.9 335.2 467.3 333.0M480.3 294.9Q479.9 291.2 478.9 287.6M486.4 308.8Q486.0 306.6 484.7 304.8M474.4 326.2Q473.1 325.0 473.1 323.1M481.7 318.1Q480.7 315.2 480.3 312.2M477.6 325.1Q475.7 322.0 474.6 318.6M485.5 304.8Q485.7 301.8 484.7 299.0M480.7 320.7Q479.3 317.6 477.7 314.5M471.0 332.2Q470.2 330.3 468.8 328.8M482.1 299.8Q482.3 296.6 481.5 293.4M478.5 323.3Q477.3 320.9 476.0 318.5M473.7 330.2Q472.4 327.1 470.6 324.2M486.2 306.0Q485.5 304.2 484.7 302.5M471.6 330.6Q470.1 329.3 469.9 327.3M486.5 312.0Q485.0 309.2 483.9 306.2M481.8 320.0Q480.5 317.1 479.6 314.0M471.9 331.9Q471.5 329.6 469.8 327.8M480.9 294.1Q480.3 292.3 479.7 290.5M486.5 308.1Q485.3 305.3 484.6 302.3M470.4 334.2Q469.6 331.3 467.5 329.0M482.7 298.8Q482.3 295.8 481.2 293.0M485.7 308.9Q485.7 306.3 484.4 304.2M483.9 300.8Q484.3 298.6 483.4 296.6M485.1 304.1Q485.2 301.0 484.4 297.9M474.5 330.7Q471.7 327.6 470.2 323.8M477.2 323.3Q476.6 320.0 474.7 317.4M474.0 330.0Q472.0 328.2 471.2 325.6M485.2 302.4Q483.8 299.1 483.4 295.7M480.5 295.2Q479.5 292.5 479.7 289.7M484.5 314.8Q483.2 310.8 482.7 306.7M485.8 308.1Q484.6 306.4 484.8 304.3M479.8 294.4Q479.6 292.1 479.1 289.8M482.8 315.0Q482.9 312.8 481.8 310.8M480.9 319.3Q479.7 316.4 479.1 313.1M476.1 324.3Q475.3 321.3 473.5 318.7M479.5 293.3Q478.7 291.1 478.8 288.8M471.7 331.8Q470.8 329.5 469.6 327.3M473.7 330.0Q472.4 327.1 471.4 324.2" stroke="#003fe0" stroke-width="0.7" fill="none" stroke-linecap="round"/>
<path d="M484.7 396.8Q484.3 399.7 484.7 402.6M479.3 398.3Q478.7 400.3 478.9 402.3M486.5 398.5Q486.3 400.7 486.6 402.9M477.7 395.5Q477.7 398.8 476.7 401.8M491.3 390.3Q491.7 393.1 492.8 395.7M476.9 397.8Q475.8 399.8 475.6 402.0M491.0 391.0Q491.3 394.1 491.4 397.3M487.5 398.6Q486.8 401.1 487.3 403.7M495.8 385.7Q496.0 388.2 497.0 390.5M490.7 392.7Q489.8 396.1 490.5 399.6M473.9 394.2Q473.3 396.9 472.0 399.4M500.2 386.6Q500.7 388.8 502.2 390.5M494.9 387.2Q495.9 389.7 495.5 392.4M486.8 398.0Q486.1 400.5 486.1 403.2M482.6 396.5Q482.7 399.4 481.3 402.0M480.5 397.0Q480.9 399.6 480.0 402.1M480.7 396.4Q480.8 399.6 479.9 402.7M480.0 395.6Q478.7 398.5 478.6 401.6M484.6 398.1Q484.8 400.8 483.6 403.3M495.3 384.9Q495.5 388.4 496.8 391.6M486.4 398.9Q486.1 400.4 486.2 402.0M491.1 390.3Q491.1 392.8 492.3 394.9M500.9 384.0Q502.0 387.0 503.2 390.0M487.9 395.6Q487.5 399.2 487.7 402.8M470.5 392.4Q469.9 394.3 469.3 396.0M489.9 397.3Q489.7 400.0 489.4 402.6M478.0 398.0Q476.8 399.6 476.8 401.6M483.5 398.2Q483.3 400.4 482.8 402.6M500.7 385.1Q501.2 387.4 501.6 389.6M486.2 396.4Q485.8 400.1 485.8 403.8M470.8 391.0Q469.2 393.5 468.6 396.4M481.7 398.4Q482.0 400.2 481.5 402.0M491.0 389.8Q490.9 392.4 491.7 395.0M473.9 392.2Q473.1 395.2 471.6 398.0M481.8 397.4Q480.5 400.2 480.6 403.3M472.6 392.5Q471.9 394.8 470.8 396.8M475.2 395.3Q474.8 397.5 473.6 399.4M484.6 397.1Q484.5 400.2 484.4 403.3M489.8 396.0Q489.1 399.1 489.3 402.3M486.5 398.0Q486.3 400.8 486.6 403.7M490.6 391.8Q491.6 393.8 491.3 396.0M474.9 396.2Q473.4 398.0 473.1 400.3M496.9 385.2Q497.8 387.8 497.7 390.6M469.9 390.8Q469.2 393.0 468.9 395.3M489.8 391.2Q489.7 394.0 491.0 396.6M489.9 395.6Q490.5 398.8 490.1 402.1M484.1 398.8Q483.4 401.4 483.2 404.1M490.6 389.3Q491.1 392.6 491.4 395.9M483.2 398.2Q483.3 401.1 483.3 404.1M499.7 386.4Q500.1 388.4 500.9 390.2" stroke="#003fe0" stroke-width="0.7" fill="none" stroke-linecap="round"/>
<path d="M477.7 236.5 L476.5 237.3 L475.3 238.2 L474.1 239.1 L472.9 240.0 L471.7 240.9 L470.5 241.8M462.5 213.1 L461.5 214.2 L460.6 215.4 L459.7 216.6 L458.8 217.8 L457.9 219.0 L457.0 220.2M457.9 198.3 L456.7 199.3 L455.7 200.3 L454.6 201.4 L453.5 202.4M452.6 201.7 L451.5 202.8 L450.5 204.0 L449.5 205.1 L448.6 206.2 L447.6 207.4 L446.7 208.5 L445.7 209.7 L444.8 210.9 L443.9 212.1 L443.1 213.3M487.8 209.3 L486.4 210.0 L485.1 210.7 L483.8 211.4 L482.5 212.2 L481.2 212.9 L479.9 213.7 L478.6 214.5 L477.4 215.3 L476.1 216.1 L474.9 217.0M439.2 199.9 L438.3 201.1 L437.4 202.3 L436.5 203.5 L435.6 204.7 L434.8 206.0 L434.0 207.2 L433.2 208.5 L432.4 209.7 L431.6 211.0M456.0 193.0 L454.8 194.0 L453.7 195.0 L452.6 196.0 L451.5 197.0 L450.5 198.1 L449.4 199.1 L448.4 200.2 L447.3 201.3 L446.3 202.4 L445.3 203.5M455.5 204.0 L454.5 205.0 L453.4 206.1 L452.4 207.2M482.5 221.7 L481.3 222.6 L480.1 223.4 L478.9 224.3 L477.7 225.3 L476.5 226.2M473.4 231.4 L472.2 232.3 L471.0 233.2 L469.8 234.1 L468.7 235.0 L467.5 236.0 L466.4 237.0 L465.2 238.0 L464.1 239.0 L463.0 240.0 L461.9 241.0M477.9 209.7 L476.7 210.5 L475.4 211.4 L474.2 212.3 L473.1 213.2 L471.9 214.2 L470.7 215.1M447.1 194.1 L446.1 195.2 L445.1 196.3 L444.1 197.4 L443.1 198.5 L442.1 199.7 L441.2 200.8 L440.3 202.0 L439.3 203.2 L438.4 204.4 L437.6 205.6M460.9 204.2 L459.8 205.2 L458.6 206.1 L457.5 207.1 L456.3 208.1 L455.2 209.1 L454.1 210.1 L453.0 211.1M441.8 189.9 L440.8 191.1 L439.9 192.3 L439.0 193.5 L438.1 194.7 L437.2 195.9 L436.4 197.1 L435.5 198.4 L434.7 199.6 L433.9 200.9M497.6 241.8 L496.2 242.3 L494.8 242.8 L493.4 243.3 L492.0 243.9 L490.6 244.4 L489.2 245.0 L487.8 245.6 L486.4 246.2 L485.1 246.8 L483.7 247.5M463.7 213.1 L462.6 214.1 L461.5 215.1 L460.4 216.1 L459.3 217.2 L458.3 218.3 L457.2 219.3 L456.2 220.4 L455.2 221.5 L454.2 222.6 L453.2 223.8M477.2 236.5 L475.9 237.2 L474.6 238.0 L473.3 238.8 L472.1 239.6 L470.8 240.4 L469.6 241.3 L468.4 242.2 L467.2 243.0 L466.0 243.9M444.9 209.0 L444.0 210.2 L443.1 211.3 L442.2 212.6 L441.3 213.8M446.5 212.3 L445.6 213.5 L444.7 214.7 L443.9 215.9 L443.0 217.2 L442.2 218.4 L441.4 219.7 L440.6 221.0M447.7 194.8 L446.7 196.0 L445.8 197.2 L444.9 198.4 L444.1 199.6 L443.2 200.8 L442.4 202.1 L441.6 203.3 L440.8 204.6M458.5 212.2 L457.5 213.3 L456.5 214.4 L455.5 215.5 L454.5 216.6 L453.6 217.8 L452.6 218.9 L451.7 220.1 L450.8 221.3 L449.9 222.5M476.7 226.4 L475.6 227.4 L474.4 228.4 L473.3 229.4 L472.2 230.4 L471.2 231.5M470.0 218.4 L468.9 219.4 L467.9 220.5 L466.8 221.6 L465.8 222.7 L464.8 223.8 L463.8 225.0 L462.9 226.1 L461.9 227.3 L461.0 228.5M455.7 205.9 L454.6 206.9 L453.5 208.0 L452.5 209.0M443.2 199.2 L442.4 200.5 L441.6 201.7 L440.8 203.0 L440.0 204.3 L439.3 205.6M457.3 199.8 L456.2 200.9 L455.2 202.0 L454.2 203.1 L453.1 204.2 L452.2 205.3 L451.2 206.5 L450.2 207.6M476.0 235.0 L474.8 235.9 L473.7 236.9 L472.6 237.9 L471.5 238.9 L470.4 240.0 L469.3 241.0 L468.3 242.1 L467.2 243.2 L466.2 244.3 L465.2 245.4M447.8 198.1 L446.9 199.2 L445.9 200.4 L445.0 201.6 L444.1 202.8 L443.2 204.0 L442.4 205.2 L441.5 206.5 L440.7 207.7M500.1 240.4 L498.7 240.7 L497.2 241.1 L495.8 241.6 L494.4 242.0 L492.9 242.4 L491.5 242.9 L490.1 243.4 L488.7 243.9 L487.3 244.5 L485.9 245.0M477.5 240.2 L476.3 241.1 L475.2 242.1 L474.0 243.1 L472.9 244.0 L471.8 245.1M452.3 192.1 L451.2 193.2 L450.2 194.3 L449.2 195.4 L448.2 196.5 L447.2 197.6M429.7 200.6 L429.0 202.0 L428.4 203.3 L427.7 204.7M479.5 236.6 L478.3 237.5 L477.1 238.4 L475.9 239.3 L474.7 240.3 L473.5 241.2 L472.4 242.2 L471.3 243.2 L470.2 244.2 L469.0 245.2M439.8 188.6 L438.7 189.7 L437.7 190.8 L436.7 191.9 L435.7 193.0 L434.8 194.2 L433.8 195.4 L432.9 196.5 L432.0 197.7 L431.1 198.9M487.8 215.7 L486.5 216.4 L485.1 217.1 L483.8 217.9 L482.5 218.6 L481.3 219.4 L480.0 220.2 L478.7 221.0M475.5 207.6 L474.3 208.4 L473.0 209.3 L471.8 210.2 L470.6 211.1M471.5 202.8 L470.3 203.6 L469.1 204.5 L467.9 205.4 L466.7 206.3 L465.5 207.2 L464.3 208.2 L463.2 209.1M484.2 209.0 L482.9 209.8 L481.7 210.6 L480.4 211.5 L479.2 212.3M442.2 183.5 L441.1 184.6 L440.1 185.7 L439.1 186.8 L438.2 187.9 L437.2 189.1M476.9 228.9 L475.6 229.7 L474.3 230.6 L473.1 231.4 L471.9 232.2M490.8 230.6 L489.5 231.2 L488.1 231.8 L486.8 232.5 L485.5 233.2 L484.1 233.9 L482.8 234.7 L481.5 235.4 L480.2 236.2M435.7 197.1 L435.0 198.4 L434.3 199.7 L433.6 201.0 L432.9 202.4M460.9 196.8 L459.7 197.8 L458.5 198.7 L457.4 199.7 L456.2 200.7 L455.1 201.7 L454.0 202.7 L452.9 203.7 L451.9 204.8 L450.8 205.9 L449.8 206.9M477.1 236.3 L475.8 237.0 L474.5 237.8 L473.2 238.6 L471.9 239.4 L470.6 240.2 L469.4 241.0 L468.1 241.9 L466.9 242.7 L465.7 243.6M450.5 198.3 L449.5 199.5 L448.6 200.7 L447.7 201.9 L446.8 203.1 L445.9 204.3 L445.1 205.5M442.8 198.4 L441.9 199.6 L440.9 200.7 L440.0 201.9 L439.1 203.1 L438.2 204.3 L437.3 205.5 L436.5 206.7M484.3 231.4 L483.0 232.2 L481.8 233.1 L480.6 233.9 L479.3 234.8 L478.1 235.6 L476.9 236.5 L475.7 237.5 L474.6 238.4 L473.4 239.3M494.5 242.7 L493.1 243.2 L491.7 243.8 L490.4 244.4 L489.0 245.0 L487.6 245.7 L486.3 246.4M479.0 248.3 L477.7 249.0 L476.3 249.7 L475.0 250.4M449.5 197.4 L448.5 198.5 L447.5 199.6 L446.5 200.7 L445.5 201.8 L444.5 203.0 L443.6 204.1 L442.6 205.3M440.4 198.5 L439.4 199.6 L438.4 200.7 L437.4 201.9 L436.5 203.1M437.4 187.5 L436.4 188.6 L435.5 189.8 L434.5 190.9 L433.6 192.1M450.6 188.1 L449.6 189.3 L448.7 190.4 L447.8 191.6 L446.8 192.8 L445.9 194.0 L445.1 195.2 L444.2 196.4 L443.4 197.7 L442.5 198.9M451.3 214.3 L450.4 215.5 L449.5 216.7 L448.7 217.9 L447.8 219.2 L447.0 220.4 L446.2 221.7 L445.4 223.0 L444.6 224.2M488.7 242.4 L487.4 243.1 L486.0 243.7 L484.7 244.4 L483.4 245.1 L482.0 245.8 L480.7 246.6 L479.4 247.3M490.3 222.9 L489.0 223.5 L487.7 224.2 L486.3 224.9 L485.0 225.6 L483.7 226.4 L482.4 227.1 L481.2 227.9 L479.9 228.7M441.5 208.3 L440.7 209.6 L439.9 210.9 L439.2 212.2 L438.4 213.5 L437.7 214.8 L437.0 216.2 L436.3 217.5 L435.7 218.9 L435.1 220.2 L434.4 221.6M468.1 204.6 L467.0 205.6 L465.9 206.6 L464.7 207.6 L463.7 208.6 L462.6 209.7 L461.5 210.7 L460.5 211.8M467.4 217.6 L466.2 218.6 L465.1 219.6 L464.0 220.6 L462.9 221.7 L461.9 222.7 L460.8 223.8 L459.8 224.9 L458.8 226.0 L457.7 227.1M449.0 193.4 L447.9 194.5 L446.9 195.6 L445.9 196.7 L444.9 197.8 L443.9 198.9 L442.9 200.1 L442.0 201.3 L441.0 202.4 L440.1 203.6 L439.2 204.8M445.4 185.2 L444.3 186.3 L443.3 187.4 L442.3 188.5 L441.3 189.6 L440.3 190.7 L439.4 191.9 L438.4 193.0 L437.5 194.2M455.8 191.0 L454.7 192.0 L453.6 193.0 L452.5 194.0 L451.4 195.1 L450.4 196.2 L449.3 197.3 L448.3 198.3 L447.3 199.5 L446.3 200.6 L445.3 201.7M460.9 198.8 L459.8 199.7 L458.6 200.7 L457.5 201.7 L456.4 202.7 L455.3 203.7 L454.2 204.7 L453.1 205.8M439.5 188.5 L438.5 189.6 L437.5 190.8 L436.5 191.9 L435.6 193.1 L434.6 194.2 L433.7 195.4 L432.8 196.6M487.2 245.7 L486.0 246.5 L484.7 247.2 L483.4 248.0 L482.1 248.8 L480.9 249.7 L479.6 250.5 L478.4 251.4M479.4 250.0 L478.1 250.9 L476.9 251.7 L475.7 252.6 L474.5 253.5 L473.3 254.4 L472.1 255.4 L471.0 256.3 L469.8 257.3 L468.7 258.3 L467.6 259.3M462.0 214.7 L460.9 215.7 L459.8 216.7 L458.7 217.7 L457.6 218.8 L456.5 219.8 L455.4 220.9 L454.4 222.0 L453.4 223.1 L452.4 224.2M461.7 215.1 L460.7 216.2 L459.7 217.4 L458.7 218.5 L457.8 219.7 L456.9 220.8 L456.0 222.0 L455.1 223.2 L454.2 224.5M466.8 218.9 L465.7 219.9 L464.6 220.9 L463.5 222.0 L462.4 223.0 L461.4 224.1 L460.3 225.2 L459.3 226.3 L458.3 227.4 L457.3 228.5M482.5 233.5 L481.2 234.2 L479.9 234.9 L478.6 235.7 L477.3 236.4 L476.0 237.2M460.8 211.1 L459.7 212.2 L458.6 213.2 L457.6 214.2 L456.5 215.3M482.0 240.3 L480.6 240.9 L479.2 241.5 L477.9 242.2 L476.6 242.8 L475.2 243.5 L473.9 244.2 L472.6 245.0 L471.3 245.7M498.4 238.5 L497.0 239.1 L495.6 239.7 L494.3 240.3 L492.9 241.0 L491.6 241.7 L490.2 242.4M446.2 209.8 L445.2 210.9 L444.2 212.0 L443.3 213.2 L442.3 214.4 L441.4 215.5 L440.5 216.7 L439.6 217.9 L438.7 219.2 L437.9 220.4M477.6 212.5 L476.3 213.4 L475.1 214.2 L473.9 215.1 L472.7 216.0 L471.5 216.9 L470.3 217.9 L469.2 218.8 L468.0 219.8 L466.9 220.8M487.2 243.0 L485.9 243.7 L484.6 244.4 L483.2 245.1 L481.9 245.8 L480.7 246.6 L479.4 247.4 L478.1 248.2M463.6 197.2 L462.4 198.1 L461.3 199.0 L460.1 200.0 L458.9 200.9M497.4 241.6 L495.9 242.1 L494.5 242.6 L493.1 243.2 L491.8 243.7 L490.4 244.3 L489.0 244.9 L487.6 245.5 L486.3 246.2 L484.9 246.8 L483.6 247.5M480.4 204.4 L479.2 205.2 L477.9 206.0 L476.7 206.9 L475.4 207.7 L474.2 208.6 L473.0 209.5 L471.8 210.4 L470.6 211.3M476.0 225.2 L474.9 226.2 L473.8 227.2 L472.7 228.2 L471.6 229.2 L470.5 230.2 L469.4 231.3 L468.4 232.4M439.8 199.1 L439.0 200.4 L438.2 201.7 L437.5 203.0 L436.7 204.3 L436.0 205.6 L435.3 206.9 L434.6 208.3 L434.0 209.6 L433.3 211.0 L432.7 212.3M467.1 205.8 L466.0 206.9 L464.9 207.9 L463.9 209.0 L462.8 210.1 L461.8 211.2 L460.8 212.3 L459.8 213.4M477.0 220.9 L475.8 221.8 L474.5 222.6 L473.3 223.5 L472.1 224.4 L471.0 225.4 L469.8 226.3M451.4 197.0 L450.4 198.1 L449.3 199.2 L448.3 200.3 L447.3 201.4M482.6 246.6 L481.3 247.3 L480.0 248.1 L478.7 248.8 L477.5 249.6 L476.2 250.4M459.5 210.6 L458.4 211.6 L457.3 212.6 L456.2 213.6 L455.1 214.7 L454.0 215.7 L453.0 216.8 L452.0 217.9 L451.0 219.0M470.9 218.4 L469.8 219.5 L468.7 220.5 L467.6 221.6 L466.6 222.7 L465.6 223.8 L464.6 224.9 L463.6 226.0 L462.6 227.1 L461.6 228.3 L460.7 229.4 L459.8 230.6M481.8 231.0 L480.6 231.9 L479.4 232.8 L478.2 233.7 L477.1 234.6 L475.9 235.6 L474.7 236.5 L473.6 237.5 L472.5 238.5 L471.4 239.5 L470.3 240.6 L469.2 241.6M456.8 205.2 L455.8 206.3 L454.7 207.4 L453.7 208.5 L452.8 209.6 L451.8 210.8M484.0 221.3 L482.7 222.1 L481.4 222.9 L480.2 223.7 L478.9 224.5 L477.7 225.4M488.9 221.5 L487.5 222.1 L486.2 222.9 L484.9 223.6 L483.6 224.3M484.1 228.6 L482.8 229.4 L481.5 230.2 L480.3 231.1 L479.0 231.9 L477.8 232.8 L476.6 233.7 L475.4 234.6 L474.2 235.5 L473.1 236.4M450.8 213.9 L449.9 215.1 L449.0 216.3 L448.2 217.6 L447.4 218.8 L446.5 220.1 L445.7 221.3 L445.0 222.6 L444.2 223.9 L443.5 225.2 L442.7 226.5M455.5 207.6 L454.4 208.6 L453.4 209.6 L452.3 210.7 L451.2 211.8 L450.2 212.8 L449.2 213.9 L448.2 215.1 L447.2 216.2 L446.2 217.3 L445.3 218.5 L444.3 219.7M484.1 208.8 L482.8 209.6 L481.5 210.3 L480.2 211.1M458.2 216.8 L457.1 217.9 L456.1 219.0 L455.1 220.1 L454.0 221.2 L453.0 222.3 L452.1 223.4 L451.1 224.6 L450.2 225.7 L449.2 226.9 L448.3 228.1M478.0 203.5 L476.7 204.3 L475.4 205.1 L474.2 205.9 L472.9 206.8M480.4 211.2 L479.3 212.2 L478.1 213.2 L477.0 214.2 L475.9 215.2 L474.8 216.2 L473.7 217.3 L472.7 218.3M483.8 226.7 L482.5 227.5 L481.2 228.3 L479.9 229.1 L478.7 229.9 L477.4 230.7 L476.2 231.6 L475.0 232.4 L473.8 233.3M452.5 189.1 L451.6 190.2 L450.6 191.4 L449.6 192.5 L448.7 193.7 L447.7 194.9 L446.8 196.1M445.7 206.0 L444.8 207.2 L444.0 208.5 L443.1 209.7 L442.3 211.0 L441.5 212.2 L440.7 213.5 L440.0 214.8 L439.2 216.1M451.8 186.9 L450.7 187.9 L449.6 188.9 L448.5 189.9 L447.4 191.0 L446.4 192.0M466.0 218.5 L464.9 219.6 L463.9 220.7 L462.9 221.8 L461.9 222.9 L460.9 224.0 L460.0 225.2 L459.0 226.3 L458.1 227.5M451.7 197.3 L450.7 198.4 L449.7 199.5 L448.7 200.7 L447.7 201.8 L446.8 203.0 L445.9 204.2 L445.0 205.4 L444.1 206.6 L443.2 207.8M487.6 241.5 L486.3 242.3 L485.0 243.1 L483.8 243.9 L482.5 244.7 L481.3 245.6 L480.0 246.4 L478.8 247.3 L477.6 248.2M453.7 195.0 L452.6 196.1 L451.6 197.2 L450.5 198.3 L449.5 199.4 L448.5 200.5 L447.6 201.6 L446.6 202.8 L445.7 204.0 L444.7 205.1 L443.8 206.3M467.1 208.7 L465.9 209.6 L464.7 210.5 L463.5 211.5 L462.4 212.4 L461.3 213.4 L460.1 214.4 L459.0 215.4 L457.9 216.5 L456.9 217.5 L455.8 218.6M485.3 227.2 L484.1 228.0 L482.8 228.8 L481.5 229.6 L480.3 230.5 L479.1 231.3M450.3 207.5 L449.3 208.6 L448.3 209.8 L447.4 210.9 L446.4 212.1 L445.5 213.3 L444.6 214.5 L443.7 215.7 L442.8 216.9M434.5 202.9 L433.7 204.2 L433.0 205.5 L432.2 206.8 L431.5 208.1 L430.8 209.4 L430.1 210.7M448.7 202.4 L447.7 203.5 L446.7 204.6 L445.7 205.7 L444.7 206.9 L443.8 208.0 L442.8 209.2 L441.9 210.4 L441.0 211.6 L440.1 212.8 L439.2 214.0M475.1 229.7 L474.0 230.7 L472.9 231.7 L471.8 232.7 L470.7 233.8 L469.7 234.8 L468.6 235.9 L467.6 237.0 L466.6 238.1 L465.6 239.2M456.0 207.9 L454.9 208.9 L453.8 209.9 L452.7 210.9 L451.7 212.0 L450.6 213.0M480.2 246.2 L479.0 247.0 L477.7 247.8 L476.5 248.7 L475.2 249.5 L474.0 250.4 L472.8 251.3 L471.6 252.2 L470.4 253.1 L469.2 254.0M447.4 194.1 L446.4 195.1 L445.3 196.2 L444.3 197.3 L443.3 198.4M453.8 208.7 L452.9 209.9 L452.0 211.1 L451.1 212.3 L450.2 213.5 L449.3 214.7 L448.5 216.0 L447.7 217.2 L446.9 218.5M466.2 215.9 L465.1 216.9 L464.1 218.0 L463.0 219.1 L462.0 220.2 L461.0 221.3 L460.0 222.4M450.1 212.8 L449.1 214.0 L448.1 215.1 L447.1 216.2 L446.2 217.4 L445.2 218.6 L444.3 219.7 L443.4 220.9 L442.5 222.2 L441.7 223.4M454.5 205.2 L453.5 206.3 L452.5 207.4 L451.5 208.5 L450.5 209.7 L449.5 210.8M450.0 185.9 L448.9 186.9 L447.8 187.9 L446.7 189.0 L445.6 190.0 L444.5 191.1 L443.5 192.2 L442.5 193.2 L441.5 194.4 L440.5 195.5" stroke="#9098c0" stroke-width="0.55" fill="none" stroke-linecap="round" stroke-opacity="0.8"/>
<path d="M477.7 215.6 L476.5 216.5 L475.4 217.5 L474.2 218.5 L473.1 219.5 L472.0 220.5 L470.9 221.5 L469.8 222.5 L468.7 223.6 L467.7 224.7 L466.6 225.7M438.0 218.8 L437.3 220.2 L436.7 221.5 L436.0 222.9 L435.4 224.3 L434.8 225.7 L434.3 227.0 L433.7 228.4 L433.2 229.8M448.3 195.4 L447.5 196.6 L446.7 197.9 L445.8 199.2 L445.1 200.4 L444.3 201.7 L443.5 203.0 L442.8 204.3 L442.0 205.6 L441.3 206.9 L440.6 208.3 L439.9 209.6 L439.3 210.9 L438.6 212.3 L438.0 213.6 L437.3 215.0M445.8 221.5 L445.0 222.8 L444.2 224.0 L443.5 225.3 L442.7 226.6 L442.0 227.9 L441.2 229.2 L440.5 230.6 L439.8 231.9 L439.2 233.2 L438.5 234.6M452.7 198.2 L451.7 199.4 L450.9 200.6 L450.0 201.8 L449.1 203.1 L448.3 204.3 L447.4 205.5 L446.6 206.8 L445.8 208.1 L445.0 209.3 L444.2 210.6 L443.5 211.9 L442.7 213.2 L442.0 214.5M464.5 223.8 L463.5 224.9 L462.5 226.0 L461.5 227.1 L460.6 228.3 L459.6 229.4 L458.7 230.6 L457.7 231.8 L456.8 233.0 L455.9 234.2 L455.0 235.4 L454.2 236.6M441.6 210.4 L440.8 211.7 L440.1 213.0 L439.4 214.3 L438.7 215.6 L438.0 217.0 L437.4 218.3 L436.7 219.7 L436.1 221.0 L435.5 222.4 L434.8 223.8 L434.3 225.2 L433.7 226.5 L433.1 227.9M437.7 216.8 L436.9 218.1 L436.2 219.4 L435.6 220.8 L434.9 222.1 L434.3 223.5 L433.6 224.8 L433.0 226.2 L432.4 227.6 L431.8 228.9 L431.2 230.3 L430.7 231.7 L430.2 233.1 L429.6 234.5 L429.1 235.9 L428.7 237.4M446.1 225.4 L445.5 226.7 L444.9 228.1 L444.3 229.5 L443.7 230.9 L443.1 232.3 L442.6 233.7 L442.1 235.1 L441.6 236.5 L441.1 237.9 L440.6 239.3M473.2 222.8 L472.0 223.8 L470.9 224.8 L469.8 225.8 L468.8 226.9 L467.7 227.9 L466.6 229.0 L465.6 230.1 L464.6 231.2 L463.5 232.3 L462.5 233.4 L461.5 234.5 L460.6 235.6 L459.6 236.8 L458.6 237.9 L457.7 239.1M475.7 211.6 L474.7 212.7 L473.6 213.8 L472.6 214.9 L471.6 216.0 L470.6 217.1 L469.6 218.2 L468.6 219.4 L467.7 220.5 L466.7 221.7 L465.8 222.9 L464.9 224.1 L464.0 225.3 L463.1 226.5 L462.2 227.7M439.7 202.8 L439.1 204.2 L438.5 205.6 L437.9 206.9 L437.3 208.3 L436.7 209.7 L436.2 211.1 L435.6 212.5 L435.1 213.9 L434.6 215.3 L434.1 216.7 L433.7 218.2 L433.2 219.6 L432.8 221.0M441.1 203.5 L440.4 204.9 L439.8 206.3 L439.2 207.6 L438.6 209.0 L438.1 210.4 L437.5 211.8 L437.0 213.2 L436.4 214.6 L435.9 216.0 L435.5 217.5 L435.0 218.9 L434.5 220.3 L434.1 221.7 L433.7 223.2M431.7 210.4 L431.2 211.8 L430.7 213.2 L430.2 214.6 L429.7 216.1 L429.3 217.5 L428.8 218.9 L428.4 220.4 L428.0 221.8 L427.6 223.3 L427.3 224.7 L426.9 226.2 L426.6 227.6 L426.3 229.1 L426.0 230.6M470.3 212.2 L469.2 213.2 L468.1 214.3 L467.0 215.3 L466.0 216.4 L465.0 217.5 L464.0 218.6 L462.9 219.7 L462.0 220.8 L461.0 222.0 L460.0 223.1 L459.1 224.3 L458.1 225.5M467.6 214.5 L466.6 215.6 L465.6 216.7 L464.6 217.8 L463.6 218.9 L462.6 220.1 L461.7 221.2 L460.7 222.4M434.0 218.3 L433.5 219.7 L432.9 221.1 L432.4 222.5 L431.9 223.9 L431.4 225.3 L431.0 226.8 L430.5 228.2 L430.1 229.6 L429.6 231.1 L429.2 232.5 L428.9 234.0M447.0 205.2 L446.2 206.5 L445.3 207.7 L444.5 209.0 L443.7 210.2 L442.9 211.5 L442.2 212.8 L441.4 214.1 L440.7 215.4 L439.9 216.7 L439.2 218.0 L438.5 219.4 L437.9 220.7M478.6 217.4 L477.4 218.3 L476.2 219.3 L475.1 220.2 L473.9 221.2 L472.8 222.2 L471.6 223.1 L470.5 224.1 L469.4 225.2 L468.3 226.2 L467.2 227.2 L466.2 228.3M431.9 207.1 L431.3 208.5 L430.7 209.9 L430.2 211.3 L429.6 212.6 L429.1 214.1 L428.6 215.5 L428.1 216.9 L427.6 218.3M459.2 228.0 L458.3 229.2 L457.3 230.4 L456.4 231.6 L455.5 232.8 L454.6 234.0 L453.8 235.2 L452.9 236.4 L452.0 237.7 L451.2 238.9 L450.4 240.2 L449.6 241.4 L448.8 242.7 L448.0 244.0 L447.3 245.3M470.4 225.9 L469.5 227.1 L468.5 228.2 L467.5 229.4 L466.6 230.5 L465.6 231.7 L464.7 232.9 L463.8 234.1 L462.9 235.3 L462.0 236.5M464.1 217.3 L463.1 218.4 L462.1 219.5 L461.1 220.7 L460.2 221.8 L459.2 223.0 L458.3 224.1 L457.3 225.3 L456.4 226.5 L455.5 227.7 L454.6 228.9 L453.8 230.1 L452.9 231.4 L452.0 232.6M447.6 209.6 L446.9 210.8 L446.1 212.1 L445.3 213.4 L444.6 214.7 L443.8 216.0 L443.1 217.4 L442.4 218.7 L441.8 220.0M474.6 215.8 L473.7 216.9 L472.7 218.1 L471.7 219.2 L470.8 220.4 L469.9 221.6 L468.9 222.7 L468.0 223.9 L467.2 225.2 L466.3 226.4 L465.4 227.6M466.2 238.9 L465.2 240.1 L464.3 241.3 L463.4 242.5 L462.6 243.7 L461.7 245.0 L460.9 246.2 L460.0 247.5 L459.2 248.7 L458.4 250.0 L457.6 251.3M452.6 226.6 L451.8 227.8 L451.0 229.1 L450.2 230.4 L449.5 231.7 L448.7 233.0 L448.0 234.3 L447.3 235.7 L446.6 237.0 L446.0 238.3 L445.3 239.7 L444.7 241.0M466.4 212.5 L465.3 213.5 L464.3 214.6 L463.3 215.7 L462.3 216.8 L461.3 217.9 L460.3 219.1 L459.3 220.2 L458.3 221.4 L457.4 222.5M469.3 207.8 L468.2 208.8 L467.1 209.9 L466.1 210.9 L465.0 211.9 L463.9 213.0 L462.9 214.1 L461.8 215.2 L460.8 216.3 L459.8 217.4 L458.8 218.5 L457.8 219.6 L456.9 220.8 L455.9 221.9 L455.0 223.1 L454.1 224.3M468.3 237.0 L467.3 238.2 L466.4 239.4 L465.5 240.6 L464.6 241.8 L463.7 243.0 L462.8 244.2 L461.9 245.4 L461.1 246.7 L460.3 247.9M465.5 239.4 L464.5 240.5 L463.5 241.6 L462.5 242.7 L461.5 243.8 L460.6 245.0 L459.6 246.1 L458.7 247.3M467.3 215.9 L466.3 217.0 L465.4 218.1 L464.4 219.3 L463.4 220.4 L462.5 221.6 L461.5 222.8 L460.6 224.0 L459.7 225.2 L458.8 226.4 L458.0 227.6 L457.1 228.8 L456.3 230.1 L455.4 231.3 L454.6 232.6M448.3 229.2 L447.6 230.6 L447.0 231.9 L446.3 233.3 L445.7 234.6 L445.1 236.0 L444.5 237.4 L443.9 238.8 L443.4 240.1 L442.8 241.5 L442.3 242.9 L441.8 244.4 L441.3 245.8 L440.8 247.2 L440.4 248.6 L439.9 250.1 L439.5 251.5M433.5 216.4 L433.0 217.8 L432.5 219.2 L432.0 220.7 L431.6 222.1 L431.1 223.5 L430.7 225.0 L430.3 226.4 L429.9 227.9 L429.5 229.3 L429.2 230.8 L428.8 232.2 L428.5 233.7M454.6 215.1 L453.7 216.3 L452.8 217.5 L451.9 218.8 L451.1 220.0 L450.2 221.2 L449.4 222.5 L448.5 223.7 L447.7 225.0 L447.0 226.3 L446.2 227.5M449.3 222.3 L448.6 223.6 L448.0 225.0 L447.4 226.4 L446.8 227.7 L446.2 229.1 L445.6 230.5 L445.0 231.9 L444.5 233.3M463.0 223.6 L462.1 224.8 L461.3 226.0 L460.4 227.2 L459.5 228.5 L458.7 229.7 L457.9 231.0 L457.1 232.3 L456.3 233.5 L455.5 234.8 L454.8 236.1 L454.0 237.4 L453.3 238.7 L452.6 240.0 L451.9 241.4M452.5 217.3 L451.6 218.5 L450.8 219.7 L449.9 221.0 L449.1 222.2 L448.2 223.4 L447.4 224.7 L446.6 226.0M446.5 202.8 L445.7 204.1 L444.9 205.4 L444.1 206.7 L443.3 208.0 L442.6 209.3 L441.9 210.6 L441.1 211.9 L440.4 213.2 L439.8 214.5 L439.1 215.9M442.0 205.5 L441.2 206.8 L440.5 208.1 L439.8 209.5 L439.1 210.8 L438.4 212.1 L437.8 213.5 L437.1 214.8 L436.5 216.2M477.7 212.0 L476.6 213.1 L475.5 214.1 L474.5 215.1 L473.4 216.2 L472.4 217.3 L471.4 218.4 L470.3 219.5 L469.3 220.6 L468.3 221.7 L467.4 222.9 L466.4 224.0 L465.5 225.2 L464.5 226.4M458.2 217.1 L457.3 218.2 L456.3 219.4 L455.4 220.5 L454.4 221.7 L453.5 222.9 L452.6 224.1 L451.7 225.3M463.0 232.3 L462.1 233.5 L461.3 234.8 L460.5 236.1 L459.7 237.3 L459.0 238.6 L458.2 239.9 L457.5 241.2 L456.7 242.5 L456.0 243.9 L455.3 245.2 L454.6 246.5 L454.0 247.9 L453.3 249.2 L452.7 250.6M442.5 204.2 L441.8 205.5 L441.1 206.8 L440.4 208.1 L439.7 209.4 L439.0 210.8 L438.3 212.1 L437.7 213.5 L437.0 214.8 L436.4 216.2 L435.8 217.6 L435.2 218.9 L434.7 220.3 L434.1 221.7 L433.6 223.1M455.2 209.8 L454.2 211.0 L453.3 212.1 L452.4 213.3 L451.4 214.5 L450.6 215.7 L449.7 216.9 L448.8 218.1 L447.9 219.4 L447.1 220.6 L446.3 221.9 L445.5 223.1" stroke="#a0a0b4" stroke-width="0.6" fill="none" stroke-linecap="round" stroke-opacity="0.75"/>
<path d="M421.5 195.2 L421.1 196.7 L420.7 198.1 L420.3 199.6 L420.0 201.0 L419.6 202.5M426.4 196.6 L426.0 198.0 L425.6 199.5 L425.3 200.9 L424.9 202.4M424.4 194.0 L423.9 195.4 L423.4 196.8 L423.0 198.2 L422.5 199.7 L422.1 201.1M421.5 200.3 L421.3 201.8 L421.1 203.3 L421.0 204.8 L420.9 206.3 L420.7 207.7M428.3 195.6 L427.8 197.0 L427.4 198.4 L426.9 199.8 L426.5 201.3 L426.1 202.7 L425.7 204.2M427.6 189.2 L426.9 190.6 L426.3 191.9 L425.7 193.3 L425.2 194.7M420.9 198.7 L420.6 200.2 L420.4 201.7 L420.1 203.2 L419.9 204.6 L419.7 206.1 L419.6 207.6M428.7 189.9 L428.0 191.2 L427.4 192.6M422.6 198.1 L422.3 199.6 L422.0 201.1 L421.8 202.5 L421.5 204.0M433.5 183.4 L432.8 184.8 L432.2 186.1 L431.7 187.5 L431.1 188.9M427.5 187.6 L427.1 189.0 L426.7 190.5 L426.3 191.9 L425.9 193.4 L425.6 194.8 L425.3 196.3M431.6 195.4 L431.2 196.8 L430.7 198.3 L430.3 199.7 L429.9 201.2 L429.5 202.6M430.6 189.9 L430.0 191.2 L429.4 192.6 L428.9 194.0M419.8 195.1 L419.6 196.6 L419.3 198.0 L419.1 199.5 L418.9 201.0 L418.8 202.5 L418.6 204.0 L418.5 205.5M427.3 187.3 L426.8 188.7 L426.2 190.1 L425.7 191.5 L425.3 192.9 L424.8 194.3M429.9 194.0 L429.3 195.3 L428.6 196.7 L427.9 198.0 L427.3 199.4 L426.7 200.8M422.4 201.4 L422.1 202.9 L421.7 204.4 L421.4 205.8 L421.1 207.3M435.8 185.1 L435.0 186.4 L434.2 187.7 L433.5 189.0 L432.8 190.3M434.1 189.7 L433.3 191.0 L432.6 192.3 L431.8 193.6 L431.1 194.9 L430.4 196.2M432.7 194.9 L432.0 196.2 L431.3 197.6 L430.6 198.9 L430.0 200.3 L429.4 201.6M433.0 190.7 L432.4 192.0 L431.8 193.4 L431.2 194.8 L430.6 196.2 L430.1 197.6 L429.5 199.0 L429.0 200.4 L428.5 201.8M425.0 199.7 L424.7 201.1 L424.3 202.6 L424.0 204.0 L423.7 205.5 L423.4 207.0M429.9 186.3 L429.2 187.7 L428.5 189.0 L427.9 190.4 L427.3 191.7 L426.7 193.1 L426.1 194.5 L425.6 195.9M421.3 189.9 L420.8 191.3 L420.3 192.7 L419.8 194.1 L419.4 195.5 L419.0 197.0 L418.5 198.4 L418.1 199.9M422.5 195.6 L422.0 197.0 L421.5 198.4 L421.0 199.8 L420.6 201.3 L420.2 202.7M421.0 200.3 L420.6 201.7 L420.3 203.2 L419.9 204.6 L419.6 206.1 L419.3 207.6 L419.0 209.0 L418.7 210.5 L418.5 212.0M437.0 183.6 L436.1 184.9 L435.3 186.1 L434.5 187.4 L433.7 188.7 L433.0 190.0 L432.2 191.3M428.8 196.4 L428.1 197.7 L427.5 199.1 L426.8 200.4 L426.2 201.8 L425.6 203.2M434.5 182.9 L433.7 184.2 L433.0 185.5 L432.3 186.9 L431.6 188.2 L431.0 189.6M436.6 183.9 L435.8 185.2 L435.1 186.6 L434.4 187.9 L433.7 189.2 L433.1 190.6 L432.4 191.9 L431.8 193.3M425.2 198.1 L424.8 199.5 L424.4 201.0 L424.1 202.4 L423.7 203.9 L423.4 205.4 L423.1 206.8 L422.8 208.3M432.2 190.0 L431.7 191.4 L431.2 192.8 L430.8 194.3 L430.3 195.7 L429.9 197.1M426.4 191.5 L426.0 192.9 L425.5 194.4 L425.1 195.8 L424.7 197.3 L424.4 198.7M421.1 187.5 L420.6 188.9 L420.1 190.4 L419.7 191.8 L419.2 193.2M426.8 199.1 L426.4 200.5 L426.0 202.0 L425.6 203.4 L425.3 204.9 L425.0 206.4 L424.7 207.8 L424.4 209.3 L424.2 210.8M437.7 184.6 L436.9 185.9 L436.0 187.1 L435.2 188.4M425.1 197.1 L424.6 198.5 L424.0 199.9 L423.5 201.3 L423.1 202.7M438.3 184.6 L437.5 185.9 L436.6 187.1 L435.8 188.4 L435.0 189.6 L434.3 190.9 L433.5 192.2M422.5 200.8 L422.1 202.2 L421.7 203.7M425.1 192.3 L424.7 193.8 L424.4 195.2 L424.1 196.7 L423.8 198.2 L423.6 199.6M423.3 189.7 L422.9 191.1 L422.5 192.6 L422.0 194.0 L421.7 195.4 L421.3 196.9 L420.9 198.4 L420.6 199.8M427.1 192.4 L426.6 193.8 L426.1 195.2 L425.7 196.7 L425.2 198.1 L424.8 199.5 L424.4 201.0 L424.1 202.4 L423.7 203.9M423.7 199.0 L423.3 200.5 L423.0 202.0 L422.7 203.4M422.6 188.4 L422.1 189.8 L421.6 191.3 L421.1 192.7 L420.7 194.1 L420.3 195.6 L419.9 197.0M422.0 200.0 L421.6 201.4 L421.2 202.9 L420.9 204.3 L420.5 205.8M436.8 188.2 L435.9 189.4 L435.1 190.7 L434.3 192.0 L433.6 193.2M433.7 190.7 L433.0 192.0 L432.5 193.4 L431.9 194.8 L431.3 196.2 L430.8 197.6 L430.3 199.0 L429.8 200.4M424.5 197.9 L424.1 199.4 L423.7 200.8 L423.3 202.3 L422.9 203.7 L422.5 205.2 L422.2 206.6 L421.9 208.1M421.2 200.7 L420.9 202.2 L420.6 203.6 L420.3 205.1 L420.0 206.6 L419.7 208.0 L419.5 209.5 L419.3 211.0 L419.1 212.5M427.7 191.7 L427.1 193.1 L426.5 194.4 L426.0 195.8 L425.4 197.2 L424.9 198.7 L424.5 200.1 L424.0 201.5 L423.5 202.9" stroke="#9098c0" stroke-width="0.55" fill="none" stroke-linecap="round" stroke-opacity="0.6"/>
<path d="M363.9 225.7 L363.8 227.2 L363.7 228.7M425.0 188.5 L424.3 189.9 L423.6 191.2 L423.0 192.5M370.6 218.3 L370.4 219.8 L370.3 221.3M423.2 183.2 L422.7 184.6M377.8 213.8 L377.5 215.2 L377.2 216.7 L376.9 218.2M435.5 185.9 L434.9 187.3 L434.4 188.7M427.6 185.7 L426.9 187.0 L426.2 188.3 L425.5 189.7M377.6 213.5 L377.1 215.0 L376.7 216.4M344.0 240.6 L344.0 242.1 L343.9 243.6M400.9 200.7 L400.5 202.1 L400.2 203.6M395.3 202.8 L394.7 204.2 L394.1 205.6 L393.5 206.9 L393.0 208.3M368.1 221.6 L367.6 223.0 L367.2 224.4 L366.8 225.9M434.4 180.8 L433.8 182.2 L433.3 183.6M379.8 215.4 L379.3 216.8 L378.8 218.2 L378.3 219.6 L377.8 221.1M393.0 206.0 L392.7 207.5 L392.4 209.0 L392.1 210.4M361.6 228.7 L361.2 230.2 L360.8 231.6 L360.5 233.1M413.6 187.8 L413.0 189.2M394.4 202.6 L394.2 204.1 L394.0 205.6M356.2 233.7 L356.1 235.2 L356.1 236.7M434.3 187.2 L433.7 188.6M367.4 221.7 L367.1 223.2 L366.8 224.7 L366.5 226.1M355.8 228.5 L355.6 230.0 L355.4 231.5M409.8 195.2 L409.3 196.6 L408.8 198.0 L408.2 199.4M381.3 212.6 L380.9 214.0 L380.5 215.5M420.2 189.7 L419.9 191.2 L419.5 192.6 L419.2 194.1M383.3 208.0 L382.9 209.4 L382.5 210.9 L382.1 212.3 L381.7 213.8M393.4 206.7 L392.9 208.1 L392.4 209.5 L391.9 210.9M411.4 192.9 L411.0 194.3 L410.7 195.8 L410.3 197.3M428.5 183.0 L427.7 184.3 L426.9 185.6M356.8 230.6 L356.4 232.1M353.4 230.3 L353.2 231.8 L353.0 233.3M388.0 212.3 L387.7 213.7 L387.5 215.2 L387.3 216.7M357.1 228.7 L357.0 230.1 L356.8 231.6M420.5 184.5 L420.1 185.9 L419.7 187.3M374.0 214.3 L373.5 215.8 L373.1 217.2M375.7 215.0 L375.5 216.5 L375.3 218.0 L375.1 219.5M349.9 238.2 L349.7 239.6 L349.4 241.1M368.2 217.7 L368.0 219.2 L367.8 220.7 L367.7 222.2 L367.5 223.7M375.0 217.4 L374.6 218.8 L374.2 220.3M365.7 222.5 L365.3 224.0M362.4 224.1 L362.3 225.6M368.0 221.4 L367.8 222.9 L367.5 224.4 L367.3 225.9M412.9 188.2 L412.5 189.7 L412.1 191.1 L411.6 192.6 L411.2 194.0M354.3 235.5 L354.3 237.0M391.1 204.8 L390.6 206.2 L390.1 207.6 L389.7 209.1M403.8 195.3 L403.3 196.7 L402.7 198.1M345.0 236.9 L345.0 238.4 L345.0 239.9 L344.9 241.4M422.2 186.1 L421.7 187.6 L421.2 189.0M415.9 187.8 L415.4 189.2 L414.8 190.6 L414.3 192.0M365.5 221.5 L365.3 223.0M348.3 234.2 L348.1 235.7 L347.9 237.2 L347.7 238.7M350.0 237.7 L350.0 239.2 L350.1 240.7 L350.1 242.2M428.3 184.6 L427.7 186.0 L427.2 187.4M346.4 242.9 L346.4 244.4 L346.3 245.9M399.9 198.4 L399.3 199.8 L398.7 201.2M397.6 201.5 L397.1 203.0 L396.6 204.4 L396.1 205.8M403.8 199.1 L403.4 200.5 L403.0 202.0 L402.6 203.4 L402.2 204.9M385.2 214.2 L385.1 215.6 L384.9 217.1M383.9 212.2 L383.4 213.6 L383.0 215.0 L382.5 216.5M385.7 211.6 L385.3 213.0 L384.9 214.5 L384.6 215.9M416.5 186.5 L416.1 187.9 L415.7 189.4 L415.3 190.8M352.5 232.6 L352.5 234.1 L352.5 235.6 L352.5 237.1M365.7 225.3 L365.3 226.8 L365.0 228.2 L364.7 229.7M390.6 204.1 L390.4 205.6 L390.1 207.0M382.0 210.1 L381.7 211.5 L381.3 213.0M400.5 202.8 L400.3 204.3 L400.0 205.8M377.9 215.6 L377.5 217.0 L377.0 218.4 L376.6 219.9M435.9 186.1 L435.1 187.3 L434.3 188.6M360.5 229.5 L360.1 231.0 L359.7 232.4 L359.4 233.9M432.4 184.4 L431.6 185.7 L430.9 187.0 L430.1 188.2 L429.3 189.5M345.1 244.8 L345.2 246.3 L345.3 247.7 L345.5 249.2 L345.6 250.7M421.7 186.4 L421.4 187.8 L421.0 189.3 L420.6 190.7M352.6 237.0 L352.5 238.5 L352.5 240.0 L352.5 241.5M369.0 222.5 L368.8 224.0 L368.7 225.5 L368.6 227.0 L368.5 228.5M382.5 215.5 L382.4 217.0 L382.2 218.5M432.2 183.6 L431.5 184.9 L430.8 186.2M353.8 236.2 L353.6 237.6 L353.3 239.1 L353.1 240.6 L352.8 242.1M390.9 207.4 L390.5 208.9M417.3 191.6 L416.8 193.0 L416.3 194.5M388.7 210.3 L388.4 211.7 L388.1 213.2 L387.8 214.7M410.5 193.9 L410.0 195.3 L409.5 196.7M443.3 181.0 L442.5 182.3M418.5 189.3 L417.9 190.7 L417.2 192.1 L416.6 193.4 L416.0 194.8M365.9 219.5 L365.6 221.0 L365.3 222.4 L365.0 223.9M371.6 218.1 L371.2 219.6 L370.9 221.0 L370.5 222.5 L370.1 223.9M395.2 201.5 L394.7 202.9 L394.3 204.4 L393.8 205.8 L393.4 207.2M414.3 192.6 L413.9 194.1 L413.5 195.6M442.1 180.0 L441.6 181.4 L441.0 182.8 L440.5 184.2 L439.9 185.6M426.5 182.6 L425.9 184.0 L425.4 185.4M416.9 192.4 L416.5 193.9 L416.1 195.3M399.5 202.8 L399.1 204.2 L398.7 205.7 L398.4 207.2M410.0 196.3 L409.7 197.7 L409.4 199.2M425.2 188.3 L424.5 189.6 L423.7 190.9M419.1 191.4 L418.7 192.8 L418.3 194.3 L418.0 195.8M358.9 227.2 L358.8 228.7 L358.7 230.2M362.4 225.7 L362.0 227.2 L361.6 228.6M381.3 209.1 L381.0 210.5 L380.6 212.0 L380.2 213.5 L379.9 214.9M438.8 182.8 L438.1 184.2M371.4 217.5 L371.3 218.9 L371.1 220.4 L370.9 221.9M420.7 185.9 L420.0 187.2 L419.3 188.5M369.9 217.5 L369.8 219.0M410.6 190.5 L410.2 191.9M427.5 184.4 L426.8 185.7 L426.1 187.0 L425.3 188.3M439.7 184.9 L438.9 186.2M396.7 201.2 L396.2 202.6 L395.7 204.0M399.8 199.6 L399.5 201.1 L399.3 202.5M358.7 230.5 L358.7 232.0 L358.7 233.5M423.7 189.3 L423.2 190.7 L422.6 192.1 L422.0 193.5 L421.5 194.9M362.4 222.6 L362.1 224.0 L361.7 225.5 L361.4 227.0 L361.1 228.4M354.7 229.2 L354.4 230.7 L354.1 232.2" stroke="#9497a8" stroke-width="0.6" fill="none" stroke-linecap="round" stroke-opacity="0.75"/>
<path d="M339.2 244.6 L339.6 246.1 L339.9 247.6 L340.2 249.0M331.3 248.5 L331.6 249.9 L331.9 251.4 L332.2 252.9 L332.6 254.3M341.3 248.4 L341.7 249.9M341.9 239.3 L342.0 240.8 L342.2 242.3M337.0 247.4 L337.2 248.9 L337.3 250.4 L337.5 251.9 L337.6 253.4M342.3 247.5 L342.6 248.9M335.6 247.0 L335.8 248.5 L336.0 250.0 L336.3 251.5 L336.5 253.0M327.5 252.7 L328.0 254.1 L328.6 255.5 L329.1 256.9M336.8 242.9 L336.9 244.4 L337.1 245.9 L337.2 247.4M331.3 257.9 L331.7 259.4 L332.1 260.9 L332.4 262.3M340.3 248.5 L340.5 250.0 L340.7 251.5 L340.9 253.0M341.5 242.9 L341.7 244.4 L341.9 245.8 L342.0 247.3M334.5 251.5 L334.9 252.9 L335.3 254.4 L335.8 255.8M337.5 248.5 L337.6 250.0 L337.7 251.5 L337.8 253.0M328.5 257.7 L329.0 259.1M335.2 248.8 L335.3 250.2 L335.4 251.7M336.7 246.1 L336.9 247.6 L337.0 249.1M341.6 242.6 L341.7 244.1 L341.8 245.6 L341.9 247.1 L342.0 248.6M327.3 253.0 L327.7 254.4 L328.2 255.8 L328.7 257.3M328.8 250.4 L329.2 251.8 L329.7 253.2 L330.1 254.6M338.9 243.2 L339.1 244.7 L339.4 246.1M335.8 246.7 L336.0 248.2 L336.1 249.7 L336.3 251.2M332.3 247.5 L332.4 249.0 L332.5 250.5 L332.6 252.0M342.3 243.4 L342.2 244.9 L342.2 246.4 L342.2 247.9M327.7 255.9 L328.1 257.4 L328.4 258.9M342.6 249.0 L342.9 250.5 L343.2 252.0M330.0 259.3 L330.4 260.7 L330.9 262.1M329.2 249.5 L329.4 250.9 L329.7 252.4 L330.1 253.9M336.6 243.1 L337.0 244.6 L337.4 246.0 L337.8 247.5M328.3 257.7 L328.8 259.1 L329.2 260.5" stroke="#9497a8" stroke-width="0.6" fill="none" stroke-linecap="round" stroke-opacity="0.75"/>
<path d="M495.9 297.6 L496.1 299.1 L496.3 300.5 L496.5 302.0 L496.8 303.5 L497.0 305.0M493.2 305.0 L493.3 306.5 L493.5 308.0 L493.7 309.5 L493.9 311.0 L494.1 312.4 L494.4 313.9M499.7 295.3 L499.7 296.8 L499.7 298.3 L499.8 299.8 L499.8 301.3 L499.9 302.8 L499.9 304.3M505.1 274.5 L505.0 276.0 L504.9 277.5 L504.8 279.0 L504.7 280.5M484.0 302.2 L484.3 303.7 L484.7 305.1 L485.0 306.6 L485.4 308.0 L485.7 309.5M498.8 300.5 L498.9 302.0 L499.0 303.5 L499.1 305.0 L499.2 306.5 L499.4 308.0M496.3 294.3 L496.4 295.8 L496.4 297.3 L496.5 298.8 L496.5 300.3M496.9 306.8 L497.2 308.3 L497.5 309.8 L497.8 311.2 L498.1 312.7M487.7 301.4 L488.0 302.9 L488.3 304.4 L488.6 305.9 L488.9 307.3 L489.2 308.8 L489.5 310.3M495.7 302.2 L495.8 303.7 L495.8 305.2 L495.9 306.7 L495.9 308.2M486.3 305.9 L486.6 307.3 L487.0 308.8 L487.3 310.2M502.5 297.2 L502.6 298.7 L502.7 300.2 L502.8 301.7 L502.9 303.2M491.2 298.4 L491.5 299.9 L491.7 301.3 L491.9 302.8 L492.2 304.3 L492.4 305.8 L492.7 307.3M505.2 276.9 L505.2 278.4 L505.2 279.9 L505.2 281.4M489.3 302.4 L489.5 303.9 L489.7 305.4 L489.9 306.9 L490.2 308.4 L490.4 309.8 L490.6 311.3M489.7 303.1 L490.0 304.5 L490.4 306.0 L490.8 307.4M488.8 308.7 L489.1 310.2 L489.4 311.7 L489.7 313.1M502.7 284.5 L502.7 286.0 L502.7 287.5 L502.8 289.0 L502.8 290.5 L502.8 292.0M504.3 276.7 L504.2 278.2 L504.1 279.7 L504.0 281.2M504.9 281.5 L504.9 283.0 L504.9 284.5 L504.9 286.0 L504.9 287.5 L505.0 289.0 L505.0 290.5M497.7 298.4 L497.8 299.9 L497.8 301.4 L497.9 302.9 L498.0 304.4 L498.1 305.9 L498.2 307.4M500.3 291.0 L500.2 292.5 L500.2 294.0 L500.1 295.5 L500.1 297.0M493.2 297.2 L493.3 298.7 L493.4 300.2 L493.6 301.7 L493.7 303.2 L493.9 304.6 L494.1 306.1M498.6 303.7 L498.7 305.2 L498.8 306.7 L498.9 308.2M484.7 302.9 L485.0 304.4 L485.2 305.9 L485.5 307.4M504.3 279.8 L504.2 281.3 L504.1 282.8 L504.0 284.3 L504.0 285.8 L503.9 287.3M496.9 300.0 L497.2 301.5 L497.4 303.0 L497.7 304.5 L497.9 306.0M498.5 305.6 L498.7 307.1 L498.9 308.6 L499.1 310.1 L499.3 311.5M482.8 293.9 L482.9 295.4 L483.1 296.9 L483.3 298.4 L483.5 299.8M500.4 302.8 L500.6 304.3 L500.9 305.8 L501.2 307.2 L501.5 308.7 L501.8 310.2 L502.1 311.6M487.1 300.1 L487.3 301.6 L487.4 303.1 L487.6 304.6 L487.9 306.0M506.2 281.1 L506.2 282.6 L506.2 284.1 L506.1 285.6M482.3 294.8 L482.6 296.2 L482.9 297.7 L483.2 299.2 L483.5 300.7 L483.9 302.1 L484.2 303.6M495.0 304.5 L495.3 306.0 L495.6 307.5 L495.9 309.0 L496.2 310.4M482.3 291.8 L482.6 293.3 L483.0 294.7 L483.4 296.2 L483.7 297.6M487.6 304.7 L487.8 306.2 L488.0 307.7 L488.2 309.1 L488.4 310.6 L488.7 312.1M497.7 289.9 L497.8 291.4 L497.9 292.9 L498.0 294.4M484.2 301.9 L484.6 303.3 L485.0 304.8 L485.4 306.2 L485.8 307.6 L486.3 309.1 L486.7 310.5M501.1 294.2 L501.2 295.7 L501.3 297.2 L501.3 298.7 L501.4 300.2M500.8 289.4 L501.0 290.9 L501.1 292.4 L501.3 293.9 L501.5 295.4 L501.7 296.8" stroke="#9098c0" stroke-width="0.55" fill="none" stroke-linecap="round" stroke-opacity="0.6"/>
<path d="M526.7 277.1 L526.4 278.6 L526.2 280.0 L526.0 281.5 L525.8 283.0 L525.6 284.5 L525.5 286.0 L525.3 287.5M513.8 273.3 L513.6 274.8 L513.4 276.3 L513.2 277.8 L513.0 279.3 L512.8 280.8 L512.6 282.2 L512.5 283.7 L512.3 285.2 L512.1 286.7M517.5 270.4 L517.4 271.9 L517.3 273.4 L517.2 274.9 L517.1 276.3 L517.0 277.8 L516.9 279.3 L516.9 280.8 L516.8 282.3M507.6 271.8 L507.4 273.2 L507.2 274.7 L506.9 276.2 L506.7 277.7 L506.5 279.2 L506.3 280.7 L506.1 282.2 L505.9 283.6M531.6 284.5 L531.5 286.0 L531.3 287.5 L531.2 289.0 L531.0 290.5 L530.9 292.0 L530.8 293.5M516.7 274.1 L516.3 275.6 L516.0 277.1 L515.7 278.5 L515.4 280.0 L515.1 281.5 L514.9 283.0 L514.6 284.4M515.5 278.8 L515.2 280.3 L515.0 281.8 L514.8 283.3 L514.6 284.8 L514.4 286.2M509.8 268.7 L509.6 270.2 L509.4 271.7 L509.3 273.1 L509.1 274.6 L509.0 276.1 L508.8 277.6 L508.7 279.1 L508.6 280.6M514.2 274.6 L513.9 276.0 L513.7 277.5 L513.4 279.0 L513.2 280.5 L513.0 282.0 L512.7 283.4 L512.5 284.9 L512.3 286.4 L512.1 287.9M513.6 267.4 L513.3 268.8 L513.0 270.3 L512.7 271.8 L512.3 273.2 L512.0 274.7 L511.7 276.2 L511.5 277.6 L511.2 279.1 L510.9 280.6M509.6 280.1 L509.5 281.6 L509.4 283.1 L509.4 284.6 L509.3 286.1 L509.3 287.6 L509.3 289.1 L509.3 290.6M512.9 279.3 L512.7 280.8 L512.6 282.3 L512.4 283.8 L512.3 285.3 L512.1 286.8 L512.0 288.3 L511.9 289.8 L511.8 291.3 L511.7 292.8M512.5 273.2 L512.2 274.7 L511.9 276.2 L511.7 277.7 L511.4 279.1 L511.1 280.6 L510.9 282.1M523.2 266.6 L522.9 268.1 L522.5 269.6 L522.2 271.0 L521.9 272.5 L521.5 273.9 L521.2 275.4 L520.9 276.9 L520.7 278.4M508.0 289.1 L508.0 290.6 L508.1 292.1 L508.1 293.6 L508.2 295.1 L508.2 296.6M531.5 285.8 L531.3 287.3 L531.1 288.8 L530.9 290.3 L530.7 291.8 L530.5 293.3 L530.4 294.7 L530.2 296.2 L530.1 297.7 L530.0 299.2M530.7 266.8 L530.4 268.3 L530.2 269.7 L529.9 271.2 L529.7 272.7M506.1 280.2 L506.0 281.7 L505.9 283.1 L505.8 284.6 L505.8 286.1 L505.7 287.6 L505.7 289.1 L505.7 290.6 L505.6 292.1M514.4 280.3 L514.2 281.8 L513.9 283.3 L513.7 284.7 L513.5 286.2 L513.3 287.7 L513.1 289.2M525.8 268.0 L525.5 269.5 L525.1 271.0 L524.8 272.4 L524.4 273.9 L524.1 275.3M505.2 283.7 L505.0 285.2 L504.9 286.7 L504.7 288.2 L504.6 289.7 L504.5 291.2 L504.4 292.7 L504.3 294.2 L504.2 295.7 L504.1 297.2M530.8 269.5 L530.4 271.0 L530.1 272.4 L529.8 273.9 L529.5 275.4 L529.1 276.8 L528.8 278.3M534.5 265.2 L534.1 266.6 L533.8 268.1 L533.4 269.5 L533.1 271.0 L532.7 272.4 L532.4 273.9M505.6 284.5 L505.5 286.0 L505.3 287.5 L505.2 288.9 L505.1 290.4 L505.0 291.9 L504.9 293.4 L504.8 294.9M511.0 274.8 L510.7 276.2 L510.4 277.7 L510.2 279.2 L509.9 280.7M530.0 282.6 L529.7 284.0 L529.4 285.5 L529.1 287.0 L528.8 288.5 L528.6 289.9 L528.3 291.4 L528.1 292.9 L527.9 294.4 L527.7 295.9M512.3 282.8 L512.3 284.3 L512.3 285.8 L512.3 287.3 L512.3 288.8 L512.3 290.3 L512.4 291.8 L512.4 293.3M525.3 277.1 L525.1 278.6 L524.9 280.1 L524.7 281.6 L524.5 283.1 L524.4 284.6M528.8 275.8 L528.7 277.3 L528.6 278.8 L528.5 280.3 L528.4 281.8 L528.3 283.3 L528.2 284.8 L528.2 286.3 L528.1 287.8M505.3 277.2 L505.1 278.7 L504.9 280.2 L504.7 281.7 L504.5 283.1 L504.3 284.6 L504.2 286.1 L504.0 287.6 L503.9 289.1M517.8 276.1 L517.7 277.6 L517.5 279.1 L517.4 280.6 L517.3 282.1 L517.2 283.6M510.4 279.2 L510.2 280.6 L509.9 282.1 L509.7 283.6 L509.4 285.1M529.5 275.8 L529.3 277.3 L529.2 278.8 L529.1 280.3 L529.0 281.8 L528.9 283.3 L528.8 284.8 L528.8 286.3M504.6 290.1 L504.4 291.6 L504.3 293.1 L504.2 294.6 L504.1 296.1 L504.0 297.6M525.7 266.9 L525.5 268.4 L525.4 269.9 L525.3 271.4 L525.2 272.9 L525.1 274.4 L525.0 275.9 L524.9 277.4 L524.8 278.9M503.6 293.0 L503.4 294.5 L503.3 296.0 L503.2 297.5 L503.1 299.0 L503.0 300.5 L503.0 302.0 L502.9 303.5M521.9 277.3 L521.8 278.8 L521.6 280.3 L521.5 281.8 L521.4 283.3 L521.3 284.8 L521.2 286.3 L521.2 287.8 L521.1 289.3M516.8 272.9 L516.6 274.4 L516.3 275.9 L516.0 277.4 L515.8 278.8 L515.6 280.3 L515.4 281.8 L515.2 283.3 L515.0 284.8M531.3 270.9 L530.9 272.3 L530.6 273.8 L530.2 275.2 L529.9 276.7 L529.5 278.2M533.5 271.0 L533.2 272.4 L532.9 273.9 L532.5 275.3M528.7 274.2 L528.5 275.7 L528.2 277.1 L528.0 278.6 L527.9 280.1 L527.7 281.6 L527.5 283.1 L527.3 284.6 L527.2 286.1M525.6 278.9 L525.5 280.4 L525.5 281.9 L525.4 283.4 L525.4 284.9 L525.3 286.4 L525.3 287.9 L525.3 289.4M514.9 287.0 L514.9 288.5 L514.9 290.0 L514.9 291.5 L514.9 293.0 L514.9 294.5 L515.0 296.0M522.1 274.4 L522.0 275.9 L521.9 277.4 L521.8 278.8 L521.7 280.3 L521.6 281.8 L521.5 283.3M513.6 282.0 L513.4 283.4 L513.2 284.9 L513.0 286.4 L512.8 287.9 L512.7 289.4M525.3 274.0 L525.0 275.5 L524.8 277.0 L524.5 278.5 L524.3 279.9M535.7 265.4 L535.4 266.9 L535.2 268.3 L535.0 269.8 L534.8 271.3M523.9 281.9 L523.8 283.3 L523.8 284.8 L523.7 286.3 L523.7 287.8M507.1 277.9 L506.9 279.3 L506.6 280.8 L506.4 282.3M519.1 272.6 L518.9 274.1 L518.6 275.6 L518.3 277.1 L518.1 278.5 L517.8 280.0 L517.6 281.5 L517.3 283.0 L517.1 284.5 L516.9 286.0M516.4 279.9 L516.2 281.4 L515.9 282.9 L515.6 284.3 L515.4 285.8 L515.1 287.3M532.8 265.3 L532.5 266.8 L532.2 268.3 L532.0 269.8 L531.8 271.2 L531.5 272.7 L531.3 274.2 L531.1 275.7 L530.9 277.2M514.1 267.7 L514.0 269.2 L513.9 270.7 L513.8 272.2 L513.7 273.7 L513.6 275.2 L513.5 276.7 L513.4 278.2 L513.4 279.7 L513.3 281.2M516.0 272.0 L515.9 273.5 L515.8 275.0 L515.7 276.5 L515.6 277.9 L515.5 279.4 L515.5 280.9 L515.4 282.4M524.3 268.0 L523.9 269.4 L523.5 270.9 L523.2 272.3 L522.8 273.8M521.5 271.1 L521.2 272.6 L520.9 274.1 L520.7 275.6M517.5 269.8 L517.1 271.3 L516.8 272.7 L516.5 274.2M518.5 282.8 L518.2 284.3 L518.0 285.7 L517.8 287.2 L517.5 288.7 L517.3 290.2 L517.1 291.7M506.6 286.0 L506.3 287.5 L506.1 289.0 L506.0 290.5 L505.8 291.9M507.5 270.5 L507.2 272.0 L507.0 273.4 L506.7 274.9 L506.4 276.4 L506.2 277.9 L506.0 279.4 L505.7 280.8 L505.5 282.3 L505.3 283.8" stroke="#9098c0" stroke-width="0.55" fill="none" stroke-linecap="round" stroke-opacity="0.7"/>
<path d="M543.5 249.7 L543.0 251.1 L542.6 252.5 L542.1 253.9 L541.6 255.4M548.8 241.2 L548.5 242.7 L548.2 244.1 L547.9 245.6 L547.7 247.1 L547.4 248.6 L547.1 250.0M545.8 245.5 L545.4 246.9 L545.0 248.4 L544.5 249.8 L544.1 251.2 L543.7 252.7M553.8 228.7 L553.3 230.1 L552.8 231.5 L552.2 232.9 L551.7 234.3 L551.2 235.7 L550.7 237.1 L550.2 238.5 L549.7 239.9 L549.2 241.4M556.2 226.9 L555.8 228.3 L555.5 229.8 L555.1 231.3 L554.7 232.7 L554.4 234.2 L554.0 235.6 L553.7 237.1 L553.4 238.6M553.6 228.1 L553.1 229.5 L552.6 230.9 L552.1 232.3 L551.5 233.7 L551.0 235.2M547.8 238.7 L547.3 240.1 L546.8 241.5 L546.3 243.0 L545.8 244.4 L545.3 245.8 L544.8 247.2 L544.3 248.6 L543.8 250.0M550.3 237.2 L549.9 238.6 L549.5 240.1 L549.1 241.5 L548.7 243.0 L548.3 244.4M542.3 264.4 L542.1 265.9 L541.9 267.4 L541.6 268.8 L541.4 270.3 L541.3 271.8M554.9 226.9 L554.4 228.3 L553.9 229.7 L553.4 231.2 L552.9 232.6 L552.5 234.0M545.8 246.7 L545.4 248.2 L545.0 249.6 L544.6 251.1 L544.2 252.5 L543.8 254.0 L543.4 255.4 L543.1 256.9 L542.7 258.3M536.9 267.3 L536.7 268.8 L536.5 270.3 L536.3 271.8 L536.1 273.3 L535.9 274.8 L535.7 276.3 L535.5 277.8 L535.3 279.2M545.3 248.5 L544.9 250.0 L544.6 251.5 L544.3 252.9 L544.0 254.4M558.1 220.4 L557.6 221.8 L557.1 223.3 L556.6 224.7 L556.1 226.1 L555.6 227.5M543.3 257.8 L543.0 259.2 L542.7 260.7 L542.4 262.2 L542.1 263.7 L541.9 265.1 L541.6 266.6M539.2 263.5 L538.8 265.0 L538.5 266.5 L538.2 267.9 L537.9 269.4 L537.6 270.9 L537.3 272.4 L537.0 273.8 L536.8 275.3M558.3 221.7 L557.9 223.1 L557.4 224.5 L557.0 226.0 L556.6 227.4 L556.2 228.9 L555.7 230.3 L555.3 231.7M546.3 243.7 L545.9 245.2 L545.5 246.6 L545.2 248.1 L544.8 249.5 L544.5 251.0 L544.1 252.4M547.3 244.2 L546.9 245.7 L546.5 247.1 L546.2 248.6 L545.8 250.0 L545.4 251.5M544.7 254.4 L544.4 255.9 L544.2 257.4 L544.0 258.9 L543.8 260.4 L543.6 261.9 L543.4 263.3 L543.2 264.8M544.0 253.4 L543.6 254.9 L543.3 256.3 L542.9 257.8 L542.6 259.3 L542.3 260.7M543.6 253.2 L543.2 254.6 L542.8 256.1 L542.4 257.5 L542.0 258.9M553.7 230.8 L553.2 232.2 L552.7 233.6 L552.2 235.0 L551.7 236.4M546.2 243.7 L545.8 245.1 L545.4 246.5 L545.0 248.0 L544.5 249.4 L544.1 250.8 L543.7 252.3 L543.3 253.7 L542.9 255.2 L542.5 256.6 L542.2 258.1M551.7 232.1 L551.3 233.6 L550.8 235.0 L550.4 236.4 L550.0 237.9 L549.5 239.3 L549.1 240.8 L548.7 242.2M548.1 243.9 L547.7 245.4 L547.4 246.9 L547.1 248.3 L546.7 249.8 L546.4 251.2 L546.1 252.7 L545.8 254.2 L545.5 255.7M541.0 261.1 L540.6 262.6 L540.2 264.0 L539.7 265.4 L539.3 266.9 L538.9 268.3 L538.5 269.7 L538.1 271.2 L537.7 272.6 L537.3 274.1M553.8 230.6 L553.3 232.0 L552.8 233.4 L552.3 234.9 L551.8 236.3 L551.4 237.7 L550.9 239.1 L550.4 240.6 L550.0 242.0 L549.5 243.4M555.6 232.2 L555.3 233.6 L555.0 235.1 L554.7 236.6 L554.4 238.0 L554.1 239.5M539.7 264.3 L539.4 265.8 L539.1 267.3 L538.8 268.7 L538.5 270.2 L538.3 271.7 L538.0 273.2 L537.7 274.6 L537.5 276.1 L537.2 277.6" stroke="#9098c0" stroke-width="0.55" fill="none" stroke-linecap="round" stroke-opacity="0.6"/>
<path d="M487.2 321.0L485.9 313.4M485.3 318.1L484.8 310.9M489.4 317.4L488.1 312.5M486.6 337.9L485.6 334.6M484.4 312.9L483.7 306.6M485.3 339.1L484.4 334.2M476.1 339.5L474.6 336.1M482.6 303.2L482.1 298.3M488.0 338.8L485.7 332.7M488.6 315.9L487.7 310.3M486.2 314.0L484.9 305.1M490.5 317.9L489.9 314.7M486.4 311.0L485.6 306.2M482.2 340.9L481.0 335.3M489.2 333.9L487.3 326.5M480.1 320.6L478.9 317.2M487.3 317.2L486.4 308.3M477.8 326.7L476.7 322.4M484.8 334.6L483.7 328.5M487.7 318.4L487.3 313.2M472.2 336.9L470.1 329.6M490.4 319.8L488.8 311.2M484.4 313.5L483.3 309.9M488.5 318.5L487.7 313.5M486.8 317.7L485.8 308.9M479.1 337.1L476.8 330.0M486.7 316.2L485.6 308.6M486.9 317.5L486.0 311.5M482.2 330.7L479.5 322.7M472.5 337.9L471.0 332.7M474.2 331.4L473.0 326.7M474.2 348.6L472.4 342.6M480.7 339.5L479.5 334.2M479.8 347.7L477.8 342.1M471.7 341.8L470.5 338.0M472.7 337.8L471.2 334.8M474.9 341.7L472.3 334.5M474.8 332.7L473.8 327.9M475.2 346.2L472.9 338.2M482.3 332.7L481.2 329.8M473.3 336.8L471.0 331.0M481.2 348.2L479.0 342.2M485.2 317.8L484.0 310.3M481.3 329.1L479.8 323.0M489.2 317.6L488.6 314.6M482.4 341.8L479.3 334.2M490.1 321.7L489.1 317.2M482.6 342.4L481.3 337.7M483.8 325.0L481.9 319.6M482.5 338.4L480.1 332.8M472.7 340.0L471.7 336.4M482.4 311.8L482.1 307.3M484.4 341.1L482.9 337.3M477.3 348.0L475.4 344.5M488.3 326.8L487.3 318.6M477.2 350.6L474.9 344.1M475.7 345.8L474.4 341.2M476.6 334.7L475.9 331.6M476.2 333.1L472.7 324.9M488.5 338.4L486.0 332.3" stroke="#8a90d0" stroke-width="0.5" fill="none" stroke-linecap="round" stroke-opacity="0.7"/>
<path d="M399.0 357.0C402.1 359.3 411.0 366.5 417.5 371.0C424.0 375.5 434.6 381.8 438.0 384.0" stroke="#1846e0" stroke-width="0.6" fill="none" stroke-linecap="round" stroke-linejoin="round" stroke-opacity="0.95"/>
<path d="M399.1 358.6C402.3 361.0 411.7 368.2 418.4 372.7C425.2 377.2 436.2 383.6 439.8 385.8" stroke="#1846e0" stroke-width="0.6" fill="none" stroke-linecap="round" stroke-linejoin="round" stroke-opacity="0.95"/>
<path d="M399.2 360.2C402.6 362.6 412.3 369.8 419.4 374.4C426.4 378.9 437.8 385.3 441.5 387.5" stroke="#1846e0" stroke-width="0.6" fill="none" stroke-linecap="round" stroke-linejoin="round" stroke-opacity="0.95"/>
<path d="M399.4 361.9C402.9 364.2 413.0 371.5 420.3 376.1C427.6 380.6 439.4 387.1 443.2 389.2" stroke="#1846e0" stroke-width="0.6" fill="none" stroke-linecap="round" stroke-linejoin="round" stroke-opacity="0.95"/>
<path d="M399.5 363.5C403.1 365.9 413.7 373.2 421.2 377.8C428.8 382.3 441.0 388.8 445.0 391.0" stroke="#1846e0" stroke-width="0.6" fill="none" stroke-linecap="round" stroke-linejoin="round" stroke-opacity="0.95"/>
<path d="M399.6 365.1C403.4 367.5 414.3 374.8 422.2 379.4C430.0 384.0 442.7 390.5 446.8 392.8" stroke="#1846e0" stroke-width="0.6" fill="none" stroke-linecap="round" stroke-linejoin="round" stroke-opacity="0.95"/>
<path d="M399.8 366.8C403.6 369.1 415.0 376.5 423.1 381.1C431.2 385.8 444.3 392.3 448.5 394.5" stroke="#1846e0" stroke-width="0.6" fill="none" stroke-linecap="round" stroke-linejoin="round" stroke-opacity="0.95"/>
<path d="M399.9 368.4C403.9 370.8 415.7 378.2 424.1 382.8C432.5 387.5 445.9 394.0 450.2 396.2" stroke="#1846e0" stroke-width="0.6" fill="none" stroke-linecap="round" stroke-linejoin="round" stroke-opacity="0.95"/>
<path d="M400.0 370.0C404.2 372.4 416.3 379.8 425.0 384.5C433.7 389.2 447.5 395.8 452.0 398.0" stroke="#1846e0" stroke-width="0.6" fill="none" stroke-linecap="round" stroke-linejoin="round" stroke-opacity="0.95"/>
<path d="M469.0 229.0C466.3 231.5 457.4 239.0 453.0 244.0C448.6 249.0 445.0 254.0 442.5 259.0C440.0 264.0 439.0 269.0 438.0 274.0C437.0 279.0 436.3 284.8 436.5 289.0C436.7 293.2 438.6 297.3 439.0 299.0" stroke="#0a70f0" stroke-width="1.2" fill="none" stroke-linecap="round" stroke-linejoin="round" stroke-opacity="0.8"/>
<path d="M470.0 229.7C467.3 232.2 458.4 239.7 454.0 244.7C449.6 249.7 446.0 254.7 443.5 259.7C441.0 264.7 440.0 269.7 439.0 274.7C438.0 279.7 437.3 285.5 437.5 289.7C437.7 293.9 439.6 298.0 440.0 299.7" stroke="#0a70f0" stroke-width="1.2" fill="none" stroke-linecap="round" stroke-linejoin="round" stroke-opacity="0.8"/>
<path d="M471.0 230.4C468.3 232.9 459.4 240.4 455.0 245.4C450.6 250.4 447.0 255.4 444.5 260.4C442.0 265.4 441.0 270.4 440.0 275.4C439.0 280.4 438.3 286.2 438.5 290.4C438.7 294.6 440.6 298.7 441.0 300.4" stroke="#0a70f0" stroke-width="1.2" fill="none" stroke-linecap="round" stroke-linejoin="round" stroke-opacity="0.8"/>
<path d="M472.0 231.1C469.3 233.6 460.4 241.1 456.0 246.1C451.6 251.1 448.0 256.1 445.5 261.1C443.0 266.1 442.0 271.1 441.0 276.1C440.0 281.1 439.3 286.9 439.5 291.1C439.7 295.3 441.6 299.4 442.0 301.1" stroke="#0a70f0" stroke-width="1.2" fill="none" stroke-linecap="round" stroke-linejoin="round" stroke-opacity="0.8"/>
<path d="M431.0 213.0 L421.0 222.0 L415.5 237.5 L418.0 252.5 L423.0 267.5 L430.0 284.0 L437.5 300.0 L445.0 312.0 L454.0 324.0 L463.0 331.5 L465.0 330.0 L456.0 322.5 L447.0 311.0 L439.5 300.0 L433.5 286.0 L428.5 267.5 L427.0 252.5 L427.0 237.5 L432.0 216.0 L437.0 210.5 Z" fill="#0a88ee" fill-opacity="0.9"/>
<path d="M431.0 213.0C429.3 214.5 423.6 217.9 421.0 222.0C418.4 226.1 416.0 232.4 415.5 237.5C415.0 242.6 416.8 247.5 418.0 252.5C419.2 257.5 421.0 262.2 423.0 267.5C425.0 272.8 427.6 278.6 430.0 284.0C432.4 289.4 435.0 295.3 437.5 300.0C440.0 304.7 442.2 308.0 445.0 312.0C447.8 316.0 451.0 320.8 454.0 324.0C457.0 327.2 461.5 330.2 463.0 331.5" stroke="#19d4ee" stroke-width="1.6" fill="none" stroke-linecap="round" stroke-linejoin="round"/>
<path d="M432.5 212.4C431.0 213.7 426.1 216.3 423.8 220.5C421.4 224.7 419.0 232.2 418.4 237.5C417.8 242.8 419.2 247.5 420.2 252.5C421.2 257.5 422.6 262.2 424.4 267.5C426.1 272.8 428.6 279.1 430.9 284.5C433.1 289.9 435.6 295.5 438.0 300.0C440.4 304.5 442.8 307.8 445.5 311.8C448.2 315.7 451.5 320.4 454.5 323.6C457.5 326.9 462.0 329.9 463.5 331.1" stroke="#14c4f0" stroke-width="1.0" fill="none" stroke-linecap="round" stroke-linejoin="round"/>
<path d="M434.0 211.8C432.8 213.0 428.6 214.7 426.5 219.0C424.4 223.3 421.9 231.9 421.2 237.5C420.6 243.1 421.8 247.5 422.5 252.5C423.2 257.5 424.2 262.1 425.8 267.5C427.3 272.9 429.6 279.6 431.8 285.0C433.9 290.4 436.1 295.6 438.5 300.0C440.9 304.4 443.2 307.6 446.0 311.5C448.8 315.4 452.0 320.0 455.0 323.2C458.0 326.5 462.5 329.5 464.0 330.8" stroke="#109ef0" stroke-width="1.0" fill="none" stroke-linecap="round" stroke-linejoin="round"/>
<path d="M435.5 211.1C434.5 212.2 431.1 213.1 429.2 217.5C427.4 221.9 424.9 231.7 424.1 237.5C423.4 243.3 424.2 247.5 424.8 252.5C425.2 257.5 425.8 262.0 427.1 267.5C428.4 273.0 430.6 280.1 432.6 285.5C434.6 290.9 436.7 295.7 439.0 300.0C441.3 304.3 443.8 307.4 446.5 311.2C449.2 315.1 452.5 319.7 455.5 322.9C458.5 326.1 463.0 329.1 464.5 330.4" stroke="#0e96ee" stroke-width="1.0" fill="none" stroke-linecap="round" stroke-linejoin="round"/>
<path d="M437.0 210.5C436.2 211.4 433.7 211.5 432.0 216.0C430.3 220.5 427.8 231.4 427.0 237.5C426.2 243.6 426.8 247.5 427.0 252.5C427.2 257.5 427.4 261.9 428.5 267.5C429.6 273.1 431.7 280.6 433.5 286.0C435.3 291.4 437.2 295.8 439.5 300.0C441.8 304.2 444.2 307.2 447.0 311.0C449.8 314.8 453.0 319.3 456.0 322.5C459.0 325.7 463.5 328.8 465.0 330.0" stroke="#12a8f0" stroke-width="1.0" fill="none" stroke-linecap="round" stroke-linejoin="round"/>
<path d="M410.5 220.2C409.2 221.1 404.5 222.6 403.0 225.5C401.5 228.4 401.4 233.0 401.5 237.5C401.6 242.0 402.4 247.5 403.7 252.5C404.9 257.5 406.9 262.2 409.0 267.5C411.1 272.8 414.0 279.1 416.5 284.0C419.0 288.9 421.2 292.8 424.0 297.0C426.8 301.2 429.8 305.0 433.0 309.0C436.2 313.0 441.8 319.0 443.5 321.0" stroke="#1a90f0" stroke-width="1.25" fill="none" stroke-linecap="round" stroke-linejoin="round"/>
<path d="M388.7 234.2C388.1 234.6 385.8 234.4 385.0 236.7C384.2 239.0 383.9 243.6 384.2 248.0C384.4 252.4 385.1 258.0 386.5 263.0C387.9 268.0 390.5 273.5 392.5 278.0C394.5 282.5 396.8 286.3 398.5 290.0C400.2 293.7 400.2 295.6 403.0 300.0C405.8 304.4 410.8 311.5 415.0 316.5C419.2 321.5 426.2 327.8 428.5 330.0" stroke="#c8287e" stroke-width="1.1" fill="none" stroke-linecap="round" stroke-linejoin="round"/>
<path d="M428.5 330.0C429.5 331.0 433.2 333.5 434.5 336.0C435.8 338.5 436.0 341.5 436.0 345.0C436.0 348.5 435.0 353.5 434.5 357.0C434.0 360.5 433.2 364.5 433.0 366.0" stroke="#30d868" stroke-width="1.1" fill="none" stroke-linecap="round" stroke-linejoin="round"/>
<path d="M384.2 285.0C384.7 287.0 386.6 292.8 387.2 297.0C387.8 301.2 388.2 306.8 388.0 310.5C387.8 314.2 386.1 318.0 385.7 319.5" stroke="#c02a8a" stroke-width="1.1" fill="none" stroke-linecap="round" stroke-linejoin="round"/>
<path d="M371.5 278.0C372.2 280.0 374.5 285.8 376.0 290.0C377.5 294.2 379.0 298.1 380.5 303.0C382.0 307.9 381.8 314.0 385.0 319.5C388.2 325.0 394.2 330.0 400.0 336.0C405.8 342.0 413.2 349.5 419.5 355.5C425.8 361.5 432.1 366.9 437.5 372.0C442.9 377.1 449.6 383.7 452.0 386.0" stroke="#e8c890" stroke-width="1.1" fill="none" stroke-linecap="round" stroke-linejoin="round"/>
<path d="M333.0 268.0C335.0 270.0 341.0 276.0 345.0 280.0C349.0 284.0 352.8 288.2 357.0 292.0C361.2 295.8 365.3 298.5 370.0 303.0C374.7 307.5 380.0 313.8 385.0 319.0C390.0 324.2 392.5 326.9 400.0 334.5C407.5 342.1 421.8 356.1 430.0 364.5C438.2 372.9 446.2 381.6 449.5 385.0" stroke="#30e838" stroke-width="1.6" fill="none" stroke-linecap="round" stroke-linejoin="round"/>
<path d="M449.0 385.5C451.0 387.5 456.9 393.5 461.0 397.5C465.1 401.5 471.2 407.7 473.3 409.7" stroke="#20dcd0" stroke-width="2.3" fill="none" stroke-linecap="round" stroke-linejoin="round"/>
<path d="M415.0 350.0C417.5 352.3 425.6 359.8 430.0 364.0C434.4 368.2 437.5 371.2 441.7 375.4C445.9 379.6 450.4 384.4 455.0 389.0C459.6 393.6 467.2 400.9 469.6 403.3" stroke="#f09020" stroke-width="1.2" fill="none" stroke-linecap="round" stroke-linejoin="round"/>
<path d="M318.0 268.0C320.0 268.8 326.0 269.8 330.0 273.0C334.0 276.2 337.7 282.3 342.0 287.0C346.3 291.7 351.3 296.6 356.0 301.0C360.7 305.4 362.7 306.7 370.0 313.5C377.3 320.3 390.0 332.8 400.0 342.0C410.0 351.2 421.3 361.0 430.0 369.0C438.7 377.0 448.3 386.5 452.0 390.0" stroke="#f08a28" stroke-width="1.5" fill="none" stroke-linecap="round" stroke-linejoin="round"/>
<path d="M304.0 283.0C306.3 283.7 313.1 285.0 318.0 287.0C322.9 289.0 327.3 291.4 333.2 295.0C339.1 298.6 346.7 303.3 353.4 308.5C360.1 313.7 366.5 320.0 373.6 326.4C380.7 332.8 388.1 339.9 396.0 346.6C403.9 353.4 412.6 360.3 420.8 366.9C429.0 373.5 437.6 377.4 445.0 386.0C452.4 394.6 461.7 413.1 465.0 418.5" stroke="#b8e820" stroke-width="1.5" fill="none" stroke-linecap="round" stroke-linejoin="round"/>
<path d="M308.0 278.0C310.3 278.8 317.0 280.7 322.0 283.0C327.0 285.3 332.3 288.2 338.0 292.0C343.7 295.8 349.7 300.7 356.0 306.0C362.3 311.3 369.0 317.7 376.0 324.0C383.0 330.3 390.3 337.3 398.0 344.0C405.7 350.7 414.0 357.2 422.0 364.0C430.0 370.8 439.3 377.7 446.0 384.5C452.7 391.3 459.3 401.6 462.0 405.0" stroke="#58e858" stroke-width="1.4" fill="none" stroke-linecap="round" stroke-linejoin="round"/>
<path d="M399.4 370.2C400.7 371.3 404.2 375.1 407.0 377.0C409.8 378.9 411.2 379.2 416.3 381.5C421.4 383.8 431.7 387.7 437.5 391.0C443.3 394.3 447.2 398.4 451.0 401.5C454.8 404.6 458.5 408.3 460.0 409.7" stroke="#f08a28" stroke-width="1.5" fill="none" stroke-linecap="round" stroke-linejoin="round"/>
<path d="M410.5 386.5C413.8 387.4 424.2 389.7 430.0 391.7C435.8 393.7 440.0 395.1 445.0 398.5C450.0 401.9 457.5 409.8 460.0 412.0" stroke="#48e060" stroke-width="1.5" fill="none" stroke-linecap="round" stroke-linejoin="round"/>
<path d="M427.0 394.0C430.0 395.5 438.7 398.9 445.0 403.0C451.3 407.1 461.7 416.1 465.0 418.7" stroke="#a8e030" stroke-width="1.5" fill="none" stroke-linecap="round" stroke-linejoin="round"/>
<path d="M527.0 313.7C525.2 313.7 519.2 312.6 516.5 313.7C513.8 314.8 511.6 317.4 510.5 320.5C509.4 323.6 509.2 328.0 509.7 332.5C510.2 337.0 512.4 342.8 513.5 347.5C514.6 352.2 515.8 357.2 516.5 361.0C517.2 364.8 517.8 368.5 518.0 370.0" stroke="#20d0a0" stroke-width="1.1" fill="none" stroke-linecap="round" stroke-linejoin="round"/>
<path d="M512.0 322.0C511.9 323.8 510.9 328.7 511.5 333.0C512.1 337.3 514.3 343.3 515.5 348.0C516.7 352.7 517.8 357.0 518.5 361.0C519.2 365.0 519.8 370.2 520.0 372.0" stroke="#18c8c0" stroke-width="1.0" fill="none" stroke-linecap="round" stroke-linejoin="round"/>
<path d="M533.7 318.2C532.6 318.3 528.6 317.9 527.0 319.0C525.4 320.1 524.1 321.5 524.0 325.0C523.9 328.5 525.6 335.0 526.2 340.0C526.8 345.0 527.5 352.5 527.7 355.0" stroke="#28d888" stroke-width="1.1" fill="none" stroke-linecap="round" stroke-linejoin="round"/>
<path d="M527.7 355.0 L526.2 367.0" stroke="#e0e020" stroke-width="1.3" fill="none" stroke-linecap="round" stroke-linejoin="round"/>
<path d="M536.0 283.0C536.6 286.2 539.1 295.5 539.7 302.5C540.3 309.5 540.1 319.0 539.7 325.0C539.3 331.0 537.9 336.2 537.5 338.5" stroke="#18c0c8" stroke-width="0.9" fill="none" stroke-linecap="round" stroke-linejoin="round"/>
<path d="M481.2 291.2C481.7 293.1 484.3 298.1 484.2 302.5C484.1 306.9 481.1 315.0 480.5 317.5" stroke="#e06060" stroke-width="1.1" fill="none" stroke-linecap="round" stroke-linejoin="round"/>
<path d="M502.2 323.5C502.3 325.1 502.6 329.8 503.0 333.0C503.4 336.2 504.2 341.3 504.5 343.0" stroke="#c890b0" stroke-width="0.9" fill="none" stroke-linecap="round" stroke-linejoin="round"/>
<path d="M515.0 323.5C514.9 324.9 514.6 329.2 514.6 332.0C514.6 334.8 514.9 338.7 515.0 340.0" stroke="#c8a0a0" stroke-width="0.9" fill="none" stroke-linecap="round" stroke-linejoin="round"/>
<path d="M475.0 355.0C476.0 357.0 478.5 362.8 481.0 367.0C483.5 371.2 487.0 377.0 490.0 380.5C493.0 384.0 497.5 386.8 499.0 388.0" stroke="#28d070" stroke-width="1.3" fill="none" stroke-linecap="round" stroke-linejoin="round"/>
<path d="M461.5 343.0C461.8 345.5 461.2 353.0 463.0 358.0C464.8 363.0 468.5 368.2 472.0 373.0C475.5 377.8 480.3 383.3 484.0 386.5C487.7 389.7 492.3 391.1 494.0 392.0" stroke="#20c890" stroke-width="1.1" fill="none" stroke-linecap="round" stroke-linejoin="round"/>
<path d="M450.2 352.0 L452.5 367.0" stroke="#20b8e8" stroke-width="1.3" fill="none" stroke-linecap="round" stroke-linejoin="round"/>
<path d="M484.0 386.5C485.0 387.6 487.8 392.4 490.0 393.0C492.2 393.6 495.8 390.5 497.0 390.0" stroke="#20d8d8" stroke-width="1.2" fill="none" stroke-linecap="round" stroke-linejoin="round"/>
<path d="M314.0 265.0C315.0 264.5 318.3 261.5 320.0 262.0C321.7 262.5 322.3 267.3 324.0 268.0C325.7 268.7 329.0 266.3 330.0 266.0" stroke="#58d8c8" stroke-width="1.2" fill="none" stroke-linecap="round" stroke-linejoin="round"/>
<path d="M316.0 262.0C316.5 262.7 317.3 264.7 319.0 266.0C320.7 267.3 324.8 269.3 326.0 270.0" stroke="#40e0d0" stroke-width="1.1" fill="none" stroke-linecap="round" stroke-linejoin="round"/>
<path d="M321.0 276.0C321.8 275.0 324.8 272.0 326.0 270.0C327.2 268.0 327.7 265.0 328.0 264.0" stroke="#f0a028" stroke-width="1.2" fill="none" stroke-linecap="round" stroke-linejoin="round"/>
<path d="M311.0 275.0C311.8 275.7 314.2 278.7 316.0 279.0C317.8 279.3 321.0 277.3 322.0 277.0" stroke="#60e060" stroke-width="1.2" fill="none" stroke-linecap="round" stroke-linejoin="round"/>
<path d="M330.0 262.0C330.5 263.7 331.8 269.0 333.0 272.0C334.2 275.0 336.3 278.7 337.0 280.0" stroke="#1030c0" stroke-width="1.2" fill="none" stroke-linecap="round" stroke-linejoin="round"/>
<path d="M376.0 215.5C376.4 214.5 377.7 211.3 378.5 209.5C379.3 207.7 380.6 205.3 381.0 204.5" stroke="#e0e020" stroke-width="1.0" fill="none" stroke-linecap="round" stroke-linejoin="round"/>
<path d="M373.5 221.5C373.8 220.6 374.4 217.7 375.0 216.0C375.6 214.3 376.7 212.2 377.0 211.5" stroke="#f0a030" stroke-width="1.0" fill="none" stroke-linecap="round" stroke-linejoin="round"/>
<path d="M377.0 222.5C377.4 221.5 378.8 218.2 379.5 216.5C380.2 214.8 381.2 212.8 381.5 212.0" stroke="#30c8e0" stroke-width="0.9" fill="none" stroke-linecap="round" stroke-linejoin="round"/>
<path d="M379.0 214.0 L381.5 208.0" stroke="#50e070" stroke-width="0.9" fill="none" stroke-linecap="round" stroke-linejoin="round"/>
<path d="M389.0 208.0 L391.5 202.0" stroke="#50e060" stroke-width="0.9" fill="none" stroke-linecap="round" stroke-linejoin="round"/>
<path d="M364.0 229.0 L366.5 222.5" stroke="#70e040" stroke-width="0.8" fill="none" stroke-linecap="round" stroke-linejoin="round"/>
<path d="M342.0 248.0 L344.5 242.0" stroke="#60e060" stroke-width="0.8" fill="none" stroke-linecap="round" stroke-linejoin="round"/>
<path d="M355.0 231.0 L356.5 227.5" stroke="#e04040" stroke-width="0.8" fill="none" stroke-linecap="round" stroke-linejoin="round"/>
<path d="M448.5 189.5C449.6 189.2 453.0 188.0 455.0 187.5C457.0 187.0 459.6 186.7 460.5 186.5" stroke="#30e070" stroke-width="1.0" fill="none" stroke-linecap="round" stroke-linejoin="round"/>
<path d="M471.0 203.3C472.5 203.1 477.0 202.0 480.0 201.8C483.0 201.6 487.5 202.1 489.0 202.2" stroke="#30d890" stroke-width="1.0" fill="none" stroke-linecap="round" stroke-linejoin="round"/>
<path d="M463.5 257.0C465.0 254.2 469.2 244.6 472.5 240.5C475.8 236.4 480.4 233.7 483.0 232.2C485.6 230.7 487.2 231.6 488.0 231.5" stroke="#40d890" stroke-width="1.0" fill="none" stroke-linecap="round" stroke-linejoin="round"/>
<path d="M487.0 238.0C488.7 238.1 493.8 238.2 497.0 238.5C500.2 238.8 504.5 239.5 506.0 239.7" stroke="#30d0d0" stroke-width="1.0" fill="none" stroke-linecap="round" stroke-linejoin="round"/>
<path d="M569.6 213.0C569.0 215.5 567.6 222.1 566.3 228.0C565.0 233.9 563.3 241.4 561.8 248.6C560.3 255.8 558.5 263.8 557.4 271.0C556.3 278.2 555.4 288.5 555.0 292.0" stroke="#20a8e0" stroke-width="0.9" fill="none" stroke-linecap="round" stroke-linejoin="round"/>
<path d="M566.0 215.0C565.5 218.3 564.2 228.2 563.0 235.0C561.8 241.8 559.7 252.5 559.0 256.0" stroke="#a8b0d8" stroke-width="0.7" fill="none" stroke-linecap="round" stroke-linejoin="round" stroke-opacity="0.9"/>
<path d="M563.5 216.0C562.9 219.7 561.3 230.3 560.0 238.0C558.7 245.7 556.2 258.0 555.5 262.0" stroke="#98a4d8" stroke-width="0.6" fill="none" stroke-linecap="round" stroke-linejoin="round" stroke-opacity="0.8"/>
<path d="M336.0 269.0C338.0 271.0 344.0 277.0 348.0 281.0C352.0 285.0 356.0 289.2 360.0 293.0C364.0 296.8 370.0 302.2 372.0 304.0" stroke="#38f030" stroke-width="1.5" fill="none" stroke-linecap="round" stroke-linejoin="round"/>
<path d="M320.0 267.0C320.7 267.8 322.5 270.7 324.0 272.0C325.5 273.3 328.2 274.5 329.0 275.0" stroke="#f09028" stroke-width="1.4" fill="none" stroke-linecap="round" stroke-linejoin="round"/>
</svg><!--/FIB-->

  <!-- bottom labels -->
  <div class="txt" style="left:9.6px;top:543.5px;letter-spacing:0.14px;">1044 fiber(s)</div>
  <div class="txt" style="left:111.8px;top:543.5px;letter-spacing:0.09px;">1044 displayed</div>
  <div class="txt" style="left:83.6px;top:557.5px;letter-spacing:0.2px;">100%</div>

  <!-- slider -->
  <div class="abs" style="left:112px;top:560.8px;width:120px;height:4.4px;box-sizing:border-box;background:#6f9fd2;border:1px solid #587fae;border-radius:1.5px;"></div>
  <div class="abs" style="left:230px;top:558px;width:16.8px;height:9.6px;box-sizing:border-box;background:linear-gradient(#fefefd,#eeebe7);border:1px solid #a59f97;border-radius:2.5px;"></div>
  <svg class="abs" style="left:230px;top:558.3px;" width="17" height="9" viewBox="0 0 17 9"><path d="M6.4 2.2v4.6M8.4 2.2v4.6M10.4 2.2v4.6" stroke="#c2bcb5" stroke-width="0.7"/></svg>
  <!-- cursor -->
  <svg class="abs" style="left:80.8px;top:53.8px;" width="12" height="16" viewBox="0 0 12 16"><path d="M2 2 L2 12 L4.4 9.8 L6.2 13.8 L7.8 13 L6 9.2 L9.2 9.2 Z" fill="#999" fill-opacity="0.45"/><path d="M1 1 L1 10.6 L3.3 8.6 L5 12.6 L6.6 11.8 L4.9 8 L7.8 8 Z" fill="#111" stroke="#fff" stroke-width="0.5" stroke-opacity="0.8"/></svg>

  <div class="btn" style="left:9px;top:572.1px;width:55px;height:16.6px;line-height:14.6px;">Apply</div>
  <div class="btn" style="left:252px;top:572.2px;width:58.6px;height:16.4px;line-height:15px;">Plane Option</div>
  <div class="btn" style="left:17.1px;top:273.2px;width:223.9px;height:15.6px;line-height:14px;">Show</div>
  <div class="btn" style="left:17.1px;top:294.2px;width:109.4px;height:15.8px;line-height:14.4px;">Undo</div>
  <div class="btn" style="left:131px;top:294.2px;width:110px;height:15.8px;line-height:14.4px;">Next</div>
</div>
</body>
</html>
